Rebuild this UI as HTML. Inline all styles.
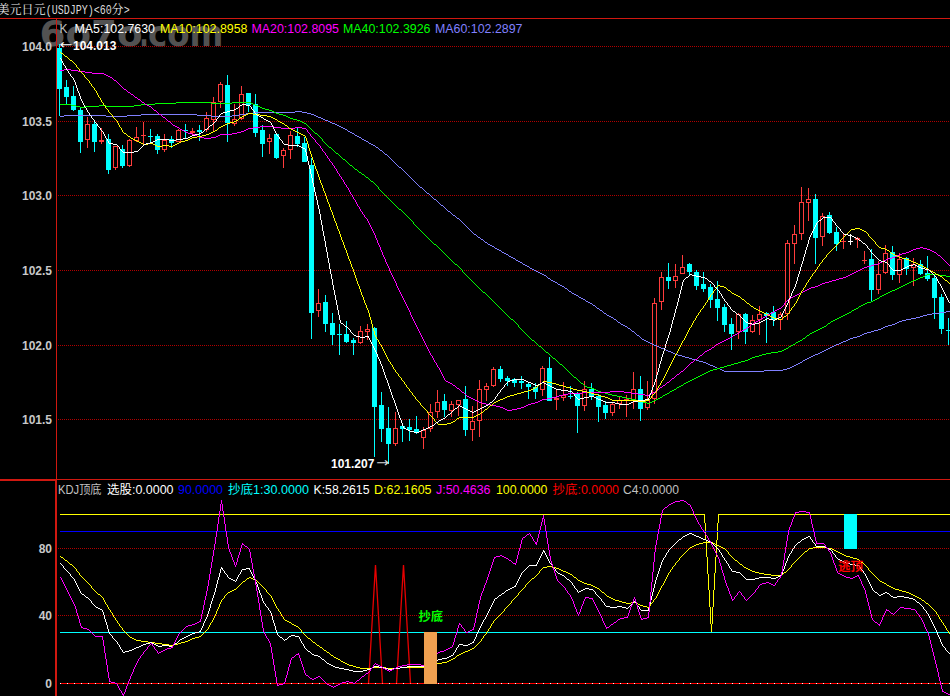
<!DOCTYPE html><html><head><meta charset="utf-8"><title>USDJPY</title><style>html,body{margin:0;padding:0;background:#000;overflow:hidden}svg{display:block}text{white-space:pre}</style></head><body>
<svg width="950" height="696" viewBox="0 0 950 696">
<rect width="950" height="696" fill="#000"/>
<text y="45.5" font-family="'DejaVu Sans',sans-serif" font-weight="bold" font-size="35" fill="#525252"><tspan x="39.6" textLength="103" lengthAdjust="spacingAndGlyphs">6o7o</tspan><tspan x="139.2" textLength="9.5" lengthAdjust="spacingAndGlyphs">.</tspan><tspan x="148" textLength="75.5" lengthAdjust="spacingAndGlyphs">com</tspan></text>
<g shape-rendering="crispEdges">
<rect x="0" y="18" width="950" height="1" fill="#d01810"/>
<rect x="0" y="479" width="950" height="1" fill="#d01810"/>
<rect x="0" y="480" width="57" height="1" fill="#d01810"/>
<rect x="56" y="18" width="1" height="678" fill="#d01810"/>
<rect x="55" y="480" width="1" height="216" fill="#d01810"/>
<line x1="58" y1="46.5" x2="950" y2="46.5" stroke="#b00000" stroke-width="1" stroke-dasharray="1 1"/>
<line x1="58" y1="121.5" x2="950" y2="121.5" stroke="#b00000" stroke-width="1" stroke-dasharray="1 1"/>
<line x1="58" y1="195.5" x2="950" y2="195.5" stroke="#b00000" stroke-width="1" stroke-dasharray="1 1"/>
<line x1="58" y1="270.5" x2="950" y2="270.5" stroke="#b00000" stroke-width="1" stroke-dasharray="1 1"/>
<line x1="58" y1="345.5" x2="950" y2="345.5" stroke="#b00000" stroke-width="1" stroke-dasharray="1 1"/>
<line x1="58" y1="419.5" x2="950" y2="419.5" stroke="#b00000" stroke-width="1" stroke-dasharray="1 1"/>
<line x1="58" y1="548.5" x2="950" y2="548.5" stroke="#b00000" stroke-width="1" stroke-dasharray="1 1"/>
<line x1="58" y1="615.5" x2="950" y2="615.5" stroke="#b00000" stroke-width="1" stroke-dasharray="1 1"/>
</g>
<g shape-rendering="crispEdges">
<rect x="59" y="44" width="1" height="72" fill="#00ffff"/>
<rect x="57" y="48" width="5" height="41" fill="#00ffff"/>
<rect x="66" y="80" width="1" height="25" fill="#00ffff"/>
<rect x="64" y="87" width="5" height="10" fill="#00ffff"/>
<rect x="73" y="86" width="1" height="25" fill="#00ffff"/>
<rect x="71" y="96" width="5" height="14" fill="#00ffff"/>
<rect x="80" y="108" width="1" height="45" fill="#00ffff"/>
<rect x="78" y="110" width="5" height="32" fill="#00ffff"/>
<rect x="87" y="117" width="1" height="7" fill="#ff3c3c"/>
<rect x="87" y="140" width="1" height="8" fill="#ff3c3c"/>
<rect x="85.5" y="124.5" width="4" height="15" fill="#000" stroke="#ff3c3c" stroke-width="1"/>
<rect x="94" y="122" width="1" height="30" fill="#00ffff"/>
<rect x="92" y="124" width="5" height="18" fill="#00ffff"/>
<rect x="101" y="128" width="1" height="12" fill="#ff3c3c"/>
<rect x="101" y="142" width="1" height="2" fill="#ff3c3c"/>
<rect x="99" y="140" width="5" height="2" fill="#ff3c3c"/>
<rect x="108" y="134" width="1" height="40" fill="#00ffff"/>
<rect x="106" y="139" width="5" height="31" fill="#00ffff"/>
<rect x="115" y="168" width="1" height="2" fill="#ff3c3c"/>
<rect x="113.5" y="146.5" width="4" height="21" fill="#000" stroke="#ff3c3c" stroke-width="1"/>
<rect x="122" y="145" width="1" height="23" fill="#00ffff"/>
<rect x="120" y="149" width="5" height="17" fill="#00ffff"/>
<rect x="129" y="139" width="1" height="1" fill="#ff3c3c"/>
<rect x="129" y="166" width="1" height="1" fill="#ff3c3c"/>
<rect x="127.5" y="140.5" width="4" height="25" fill="#000" stroke="#ff3c3c" stroke-width="1"/>
<rect x="136" y="127" width="1" height="10" fill="#ff3c3c"/>
<rect x="136" y="141" width="1" height="1" fill="#ff3c3c"/>
<rect x="134.5" y="137.5" width="4" height="3" fill="#000" stroke="#ff3c3c" stroke-width="1"/>
<rect x="143" y="122" width="1" height="13" fill="#ff3c3c"/>
<rect x="143" y="136" width="1" height="8" fill="#ff3c3c"/>
<rect x="141" y="135" width="5" height="1" fill="#ff3c3c"/>
<rect x="150" y="129" width="1" height="15" fill="#00ffff"/>
<rect x="148" y="136" width="5" height="1" fill="#00ffff"/>
<rect x="157" y="134" width="1" height="20" fill="#00ffff"/>
<rect x="155" y="136" width="5" height="14" fill="#00ffff"/>
<rect x="164" y="134" width="1" height="6" fill="#ff3c3c"/>
<rect x="164" y="150" width="1" height="2" fill="#ff3c3c"/>
<rect x="162.5" y="140.5" width="4" height="9" fill="#000" stroke="#ff3c3c" stroke-width="1"/>
<rect x="171" y="136" width="1" height="12" fill="#00ffff"/>
<rect x="169" y="139" width="5" height="4" fill="#00ffff"/>
<rect x="178" y="129" width="1" height="1" fill="#ff3c3c"/>
<rect x="176.5" y="130.5" width="4" height="11" fill="#000" stroke="#ff3c3c" stroke-width="1"/>
<rect x="185" y="124" width="1" height="14" fill="#00ffff"/>
<rect x="183" y="130" width="5" height="1" fill="#00ffff"/>
<rect x="192" y="128" width="1" height="3" fill="#ff3c3c"/>
<rect x="192" y="133" width="1" height="3" fill="#ff3c3c"/>
<rect x="190" y="131" width="5" height="2" fill="#ff3c3c"/>
<rect x="199" y="125" width="1" height="16" fill="#00ffff"/>
<rect x="197" y="130" width="5" height="2" fill="#00ffff"/>
<rect x="206" y="112" width="1" height="6" fill="#ff3c3c"/>
<rect x="206" y="130" width="1" height="2" fill="#ff3c3c"/>
<rect x="204.5" y="118.5" width="4" height="11" fill="#000" stroke="#ff3c3c" stroke-width="1"/>
<rect x="213" y="97" width="1" height="5" fill="#ff3c3c"/>
<rect x="213" y="120" width="1" height="12" fill="#ff3c3c"/>
<rect x="211.5" y="102.5" width="4" height="17" fill="#000" stroke="#ff3c3c" stroke-width="1"/>
<rect x="220" y="82" width="1" height="2" fill="#ff3c3c"/>
<rect x="220" y="102" width="1" height="6" fill="#ff3c3c"/>
<rect x="218.5" y="84.5" width="4" height="17" fill="#000" stroke="#ff3c3c" stroke-width="1"/>
<rect x="227" y="75" width="1" height="67" fill="#00ffff"/>
<rect x="225" y="85" width="5" height="38" fill="#00ffff"/>
<rect x="234" y="104" width="1" height="15" fill="#ff3c3c"/>
<rect x="234" y="124" width="1" height="2" fill="#ff3c3c"/>
<rect x="232.5" y="119.5" width="4" height="4" fill="#000" stroke="#ff3c3c" stroke-width="1"/>
<rect x="241" y="86" width="1" height="8" fill="#ff3c3c"/>
<rect x="241" y="119" width="1" height="1" fill="#ff3c3c"/>
<rect x="239.5" y="94.5" width="4" height="24" fill="#000" stroke="#ff3c3c" stroke-width="1"/>
<rect x="248" y="93" width="1" height="19" fill="#00ffff"/>
<rect x="246" y="93" width="5" height="12" fill="#00ffff"/>
<rect x="255" y="94" width="1" height="43" fill="#00ffff"/>
<rect x="253" y="104" width="5" height="29" fill="#00ffff"/>
<rect x="262" y="125" width="1" height="32" fill="#00ffff"/>
<rect x="260" y="130" width="5" height="14" fill="#00ffff"/>
<rect x="269" y="134" width="1" height="4" fill="#ff3c3c"/>
<rect x="269" y="142" width="1" height="12" fill="#ff3c3c"/>
<rect x="267.5" y="138.5" width="4" height="3" fill="#000" stroke="#ff3c3c" stroke-width="1"/>
<rect x="276" y="134" width="1" height="25" fill="#00ffff"/>
<rect x="274" y="134" width="5" height="24" fill="#00ffff"/>
<rect x="283" y="148" width="1" height="2" fill="#ff3c3c"/>
<rect x="283" y="156" width="1" height="12" fill="#ff3c3c"/>
<rect x="281.5" y="150.5" width="4" height="5" fill="#000" stroke="#ff3c3c" stroke-width="1"/>
<rect x="290" y="131" width="1" height="4" fill="#ff3c3c"/>
<rect x="290" y="150" width="1" height="9" fill="#ff3c3c"/>
<rect x="288.5" y="135.5" width="4" height="14" fill="#000" stroke="#ff3c3c" stroke-width="1"/>
<rect x="297" y="128" width="1" height="19" fill="#00ffff"/>
<rect x="295" y="136" width="5" height="8" fill="#00ffff"/>
<rect x="304" y="137" width="1" height="25" fill="#00ffff"/>
<rect x="302" y="143" width="5" height="19" fill="#00ffff"/>
<rect x="311" y="158" width="1" height="181" fill="#00ffff"/>
<rect x="309" y="165" width="5" height="148" fill="#00ffff"/>
<rect x="318" y="289" width="1" height="14" fill="#ff3c3c"/>
<rect x="318" y="311" width="1" height="6" fill="#ff3c3c"/>
<rect x="316.5" y="303.5" width="4" height="7" fill="#000" stroke="#ff3c3c" stroke-width="1"/>
<rect x="325" y="295" width="1" height="37" fill="#00ffff"/>
<rect x="323" y="302" width="5" height="22" fill="#00ffff"/>
<rect x="332" y="313" width="1" height="32" fill="#00ffff"/>
<rect x="330" y="323" width="5" height="12" fill="#00ffff"/>
<rect x="339" y="324" width="1" height="31" fill="#00ffff"/>
<rect x="337" y="334" width="5" height="1" fill="#00ffff"/>
<rect x="346" y="321" width="1" height="22" fill="#00ffff"/>
<rect x="344" y="334" width="5" height="8" fill="#00ffff"/>
<rect x="353" y="338" width="1" height="17" fill="#00ffff"/>
<rect x="351" y="340" width="5" height="3" fill="#00ffff"/>
<rect x="360" y="326" width="1" height="5" fill="#ff3c3c"/>
<rect x="360" y="343" width="1" height="1" fill="#ff3c3c"/>
<rect x="358.5" y="331.5" width="4" height="11" fill="#000" stroke="#ff3c3c" stroke-width="1"/>
<rect x="367" y="324" width="1" height="5" fill="#ff3c3c"/>
<rect x="367" y="332" width="1" height="8" fill="#ff3c3c"/>
<rect x="365.5" y="329.5" width="4" height="2" fill="#000" stroke="#ff3c3c" stroke-width="1"/>
<rect x="374" y="327" width="1" height="130" fill="#00ffff"/>
<rect x="372" y="328" width="5" height="79" fill="#00ffff"/>
<rect x="381" y="392" width="1" height="50" fill="#00ffff"/>
<rect x="379" y="405" width="5" height="24" fill="#00ffff"/>
<rect x="388" y="407" width="1" height="57" fill="#00ffff"/>
<rect x="386" y="428" width="5" height="16" fill="#00ffff"/>
<rect x="395" y="412" width="1" height="16" fill="#ff3c3c"/>
<rect x="395" y="444" width="1" height="2" fill="#ff3c3c"/>
<rect x="393.5" y="428.5" width="4" height="15" fill="#000" stroke="#ff3c3c" stroke-width="1"/>
<rect x="402" y="424" width="1" height="18" fill="#00ffff"/>
<rect x="400" y="426" width="5" height="3" fill="#00ffff"/>
<rect x="409" y="419" width="1" height="22" fill="#00ffff"/>
<rect x="407" y="427" width="5" height="3" fill="#00ffff"/>
<rect x="416" y="416" width="1" height="18" fill="#00ffff"/>
<rect x="414" y="429" width="5" height="3" fill="#00ffff"/>
<rect x="423" y="427" width="1" height="3" fill="#ff3c3c"/>
<rect x="423" y="438" width="1" height="11" fill="#ff3c3c"/>
<rect x="421.5" y="430.5" width="4" height="7" fill="#000" stroke="#ff3c3c" stroke-width="1"/>
<rect x="430" y="404" width="1" height="8" fill="#ff3c3c"/>
<rect x="430" y="429" width="1" height="3" fill="#ff3c3c"/>
<rect x="428.5" y="412.5" width="4" height="16" fill="#000" stroke="#ff3c3c" stroke-width="1"/>
<rect x="437" y="390" width="1" height="12" fill="#ff3c3c"/>
<rect x="437" y="412" width="1" height="6" fill="#ff3c3c"/>
<rect x="435.5" y="402.5" width="4" height="9" fill="#000" stroke="#ff3c3c" stroke-width="1"/>
<rect x="444" y="394" width="1" height="23" fill="#00ffff"/>
<rect x="442" y="401" width="5" height="9" fill="#00ffff"/>
<rect x="451" y="401" width="1" height="3" fill="#ff3c3c"/>
<rect x="451" y="411" width="1" height="6" fill="#ff3c3c"/>
<rect x="449.5" y="404.5" width="4" height="6" fill="#000" stroke="#ff3c3c" stroke-width="1"/>
<rect x="458" y="405" width="1" height="11" fill="#ff3c3c"/>
<rect x="456.5" y="400.5" width="4" height="4" fill="#000" stroke="#ff3c3c" stroke-width="1"/>
<rect x="465" y="386" width="1" height="50" fill="#00ffff"/>
<rect x="463" y="399" width="5" height="31" fill="#00ffff"/>
<rect x="472" y="406" width="1" height="15" fill="#ff3c3c"/>
<rect x="472" y="430" width="1" height="11" fill="#ff3c3c"/>
<rect x="470.5" y="421.5" width="4" height="8" fill="#000" stroke="#ff3c3c" stroke-width="1"/>
<rect x="479" y="380" width="1" height="9" fill="#ff3c3c"/>
<rect x="479" y="421" width="1" height="16" fill="#ff3c3c"/>
<rect x="477.5" y="389.5" width="4" height="31" fill="#000" stroke="#ff3c3c" stroke-width="1"/>
<rect x="486" y="383" width="1" height="3" fill="#ff3c3c"/>
<rect x="486" y="390" width="1" height="11" fill="#ff3c3c"/>
<rect x="484.5" y="386.5" width="4" height="3" fill="#000" stroke="#ff3c3c" stroke-width="1"/>
<rect x="493" y="367" width="1" height="2" fill="#ff3c3c"/>
<rect x="493" y="386" width="1" height="1" fill="#ff3c3c"/>
<rect x="491.5" y="369.5" width="4" height="16" fill="#000" stroke="#ff3c3c" stroke-width="1"/>
<rect x="500" y="366" width="1" height="16" fill="#00ffff"/>
<rect x="498" y="369" width="5" height="10" fill="#00ffff"/>
<rect x="507" y="376" width="1" height="10" fill="#00ffff"/>
<rect x="505" y="378" width="5" height="3" fill="#00ffff"/>
<rect x="514" y="378" width="1" height="9" fill="#00ffff"/>
<rect x="512" y="379" width="5" height="4" fill="#00ffff"/>
<rect x="521" y="376" width="1" height="13" fill="#00ffff"/>
<rect x="519" y="381" width="5" height="2" fill="#00ffff"/>
<rect x="528" y="382" width="1" height="17" fill="#00ffff"/>
<rect x="526" y="384" width="5" height="3" fill="#00ffff"/>
<rect x="535" y="383" width="1" height="16" fill="#00ffff"/>
<rect x="533" y="387" width="5" height="5" fill="#00ffff"/>
<rect x="542" y="366" width="1" height="2" fill="#ff3c3c"/>
<rect x="542" y="390" width="1" height="6" fill="#ff3c3c"/>
<rect x="540.5" y="368.5" width="4" height="21" fill="#000" stroke="#ff3c3c" stroke-width="1"/>
<rect x="549" y="357" width="1" height="44" fill="#00ffff"/>
<rect x="547" y="368" width="5" height="33" fill="#00ffff"/>
<rect x="556" y="389" width="1" height="9" fill="#ff3c3c"/>
<rect x="556" y="400" width="1" height="10" fill="#ff3c3c"/>
<rect x="554" y="398" width="5" height="2" fill="#ff3c3c"/>
<rect x="563" y="382" width="1" height="13" fill="#ff3c3c"/>
<rect x="563" y="398" width="1" height="3" fill="#ff3c3c"/>
<rect x="561.5" y="395.5" width="4" height="2" fill="#000" stroke="#ff3c3c" stroke-width="1"/>
<rect x="570" y="386" width="1" height="13" fill="#00ffff"/>
<rect x="568" y="396" width="5" height="1" fill="#00ffff"/>
<rect x="577" y="392" width="1" height="41" fill="#00ffff"/>
<rect x="575" y="394" width="5" height="12" fill="#00ffff"/>
<rect x="584" y="381" width="1" height="8" fill="#ff3c3c"/>
<rect x="584" y="406" width="1" height="5" fill="#ff3c3c"/>
<rect x="582.5" y="389.5" width="4" height="16" fill="#000" stroke="#ff3c3c" stroke-width="1"/>
<rect x="591" y="383" width="1" height="17" fill="#00ffff"/>
<rect x="589" y="389" width="5" height="7" fill="#00ffff"/>
<rect x="598" y="394" width="1" height="28" fill="#00ffff"/>
<rect x="596" y="396" width="5" height="11" fill="#00ffff"/>
<rect x="605" y="401" width="1" height="18" fill="#00ffff"/>
<rect x="603" y="405" width="5" height="8" fill="#00ffff"/>
<rect x="612" y="403" width="1" height="1" fill="#ff3c3c"/>
<rect x="612" y="413" width="1" height="3" fill="#ff3c3c"/>
<rect x="610.5" y="404.5" width="4" height="8" fill="#000" stroke="#ff3c3c" stroke-width="1"/>
<rect x="619" y="396" width="1" height="4" fill="#ff3c3c"/>
<rect x="619" y="404" width="1" height="5" fill="#ff3c3c"/>
<rect x="617.5" y="400.5" width="4" height="3" fill="#000" stroke="#ff3c3c" stroke-width="1"/>
<rect x="626" y="395" width="1" height="4" fill="#ff3c3c"/>
<rect x="626" y="400" width="1" height="17" fill="#ff3c3c"/>
<rect x="624" y="399" width="5" height="1" fill="#ff3c3c"/>
<rect x="633" y="372" width="1" height="17" fill="#ff3c3c"/>
<rect x="633" y="400" width="1" height="9" fill="#ff3c3c"/>
<rect x="631.5" y="389.5" width="4" height="10" fill="#000" stroke="#ff3c3c" stroke-width="1"/>
<rect x="640" y="376" width="1" height="45" fill="#00ffff"/>
<rect x="638" y="389" width="5" height="20" fill="#00ffff"/>
<rect x="647" y="381" width="1" height="18" fill="#ff3c3c"/>
<rect x="647" y="408" width="1" height="2" fill="#ff3c3c"/>
<rect x="645.5" y="399.5" width="4" height="8" fill="#000" stroke="#ff3c3c" stroke-width="1"/>
<rect x="654" y="298" width="1" height="5" fill="#ff3c3c"/>
<rect x="654" y="399" width="1" height="5" fill="#ff3c3c"/>
<rect x="652.5" y="303.5" width="4" height="95" fill="#000" stroke="#ff3c3c" stroke-width="1"/>
<rect x="661" y="272" width="1" height="5" fill="#ff3c3c"/>
<rect x="661" y="302" width="1" height="8" fill="#ff3c3c"/>
<rect x="659.5" y="277.5" width="4" height="24" fill="#000" stroke="#ff3c3c" stroke-width="1"/>
<rect x="668" y="263" width="1" height="26" fill="#00ffff"/>
<rect x="666" y="277" width="5" height="4" fill="#00ffff"/>
<rect x="675" y="264" width="1" height="12" fill="#ff3c3c"/>
<rect x="675" y="281" width="1" height="7" fill="#ff3c3c"/>
<rect x="673.5" y="276.5" width="4" height="4" fill="#000" stroke="#ff3c3c" stroke-width="1"/>
<rect x="682" y="255" width="1" height="12" fill="#ff3c3c"/>
<rect x="680.5" y="267.5" width="4" height="6" fill="#000" stroke="#ff3c3c" stroke-width="1"/>
<rect x="689" y="263" width="1" height="13" fill="#00ffff"/>
<rect x="687" y="264" width="5" height="8" fill="#00ffff"/>
<rect x="696" y="270" width="1" height="20" fill="#00ffff"/>
<rect x="694" y="272" width="5" height="14" fill="#00ffff"/>
<rect x="703" y="272" width="1" height="20" fill="#00ffff"/>
<rect x="701" y="284" width="5" height="5" fill="#00ffff"/>
<rect x="710" y="284" width="1" height="24" fill="#00ffff"/>
<rect x="708" y="287" width="5" height="13" fill="#00ffff"/>
<rect x="717" y="281" width="1" height="40" fill="#00ffff"/>
<rect x="715" y="299" width="5" height="9" fill="#00ffff"/>
<rect x="724" y="304" width="1" height="28" fill="#00ffff"/>
<rect x="722" y="307" width="5" height="18" fill="#00ffff"/>
<rect x="731" y="318" width="1" height="32" fill="#00ffff"/>
<rect x="729" y="324" width="5" height="10" fill="#00ffff"/>
<rect x="738" y="313" width="1" height="1" fill="#ff3c3c"/>
<rect x="738" y="332" width="1" height="7" fill="#ff3c3c"/>
<rect x="736.5" y="314.5" width="4" height="17" fill="#000" stroke="#ff3c3c" stroke-width="1"/>
<rect x="745" y="313" width="1" height="31" fill="#00ffff"/>
<rect x="743" y="314" width="5" height="18" fill="#00ffff"/>
<rect x="752" y="315" width="1" height="5" fill="#ff3c3c"/>
<rect x="752" y="332" width="1" height="1" fill="#ff3c3c"/>
<rect x="750.5" y="320.5" width="4" height="11" fill="#000" stroke="#ff3c3c" stroke-width="1"/>
<rect x="759" y="306" width="1" height="8" fill="#ff3c3c"/>
<rect x="759" y="320" width="1" height="15" fill="#ff3c3c"/>
<rect x="757.5" y="314.5" width="4" height="5" fill="#000" stroke="#ff3c3c" stroke-width="1"/>
<rect x="766" y="312" width="1" height="31" fill="#00ffff"/>
<rect x="764" y="313" width="5" height="3" fill="#00ffff"/>
<rect x="773" y="306" width="1" height="20" fill="#00ffff"/>
<rect x="771" y="312" width="5" height="8" fill="#00ffff"/>
<rect x="780" y="312" width="1" height="2" fill="#ff3c3c"/>
<rect x="780" y="320" width="1" height="10" fill="#ff3c3c"/>
<rect x="778.5" y="314.5" width="4" height="5" fill="#000" stroke="#ff3c3c" stroke-width="1"/>
<rect x="787" y="240" width="1" height="3" fill="#ff3c3c"/>
<rect x="787" y="314" width="1" height="6" fill="#ff3c3c"/>
<rect x="785.5" y="243.5" width="4" height="70" fill="#000" stroke="#ff3c3c" stroke-width="1"/>
<rect x="794" y="225" width="1" height="9" fill="#ff3c3c"/>
<rect x="794" y="244" width="1" height="20" fill="#ff3c3c"/>
<rect x="792.5" y="234.5" width="4" height="9" fill="#000" stroke="#ff3c3c" stroke-width="1"/>
<rect x="801" y="187" width="1" height="15" fill="#ff3c3c"/>
<rect x="801" y="234" width="1" height="6" fill="#ff3c3c"/>
<rect x="799.5" y="202.5" width="4" height="31" fill="#000" stroke="#ff3c3c" stroke-width="1"/>
<rect x="808" y="188" width="1" height="11" fill="#ff3c3c"/>
<rect x="808" y="203" width="1" height="18" fill="#ff3c3c"/>
<rect x="806.5" y="199.5" width="4" height="3" fill="#000" stroke="#ff3c3c" stroke-width="1"/>
<rect x="815" y="194" width="1" height="70" fill="#00ffff"/>
<rect x="813" y="199" width="5" height="39" fill="#00ffff"/>
<rect x="822" y="213" width="1" height="3" fill="#ff3c3c"/>
<rect x="822" y="237" width="1" height="9" fill="#ff3c3c"/>
<rect x="820.5" y="216.5" width="4" height="20" fill="#000" stroke="#ff3c3c" stroke-width="1"/>
<rect x="829" y="212" width="1" height="22" fill="#00ffff"/>
<rect x="827" y="215" width="5" height="18" fill="#00ffff"/>
<rect x="836" y="227" width="1" height="24" fill="#00ffff"/>
<rect x="834" y="232" width="5" height="12" fill="#00ffff"/>
<rect x="843" y="234" width="1" height="7" fill="#ff3c3c"/>
<rect x="843" y="242" width="1" height="7" fill="#ff3c3c"/>
<rect x="841" y="241" width="5" height="1" fill="#ff3c3c"/>
<rect x="850" y="234" width="1" height="11" fill="#ffffff"/>
<rect x="848" y="241" width="5" height="1" fill="#ffffff"/>
<rect x="857" y="237" width="1" height="1" fill="#ff3c3c"/>
<rect x="857" y="240" width="1" height="8" fill="#ff3c3c"/>
<rect x="855" y="238" width="5" height="2" fill="#ff3c3c"/>
<rect x="864" y="251" width="1" height="9" fill="#ff3c3c"/>
<rect x="864" y="261" width="1" height="3" fill="#ff3c3c"/>
<rect x="862" y="260" width="5" height="1" fill="#ff3c3c"/>
<rect x="871" y="249" width="1" height="52" fill="#00ffff"/>
<rect x="869" y="259" width="5" height="31" fill="#00ffff"/>
<rect x="878" y="261" width="1" height="13" fill="#ff3c3c"/>
<rect x="878" y="290" width="1" height="4" fill="#ff3c3c"/>
<rect x="876.5" y="274.5" width="4" height="15" fill="#000" stroke="#ff3c3c" stroke-width="1"/>
<rect x="885" y="245" width="1" height="8" fill="#ff3c3c"/>
<rect x="885" y="273" width="1" height="1" fill="#ff3c3c"/>
<rect x="883.5" y="253.5" width="4" height="19" fill="#000" stroke="#ff3c3c" stroke-width="1"/>
<rect x="892" y="246" width="1" height="34" fill="#00ffff"/>
<rect x="890" y="252" width="5" height="23" fill="#00ffff"/>
<rect x="899" y="253" width="1" height="6" fill="#ff3c3c"/>
<rect x="899" y="275" width="1" height="8" fill="#ff3c3c"/>
<rect x="897.5" y="259.5" width="4" height="15" fill="#000" stroke="#ff3c3c" stroke-width="1"/>
<rect x="906" y="257" width="1" height="18" fill="#00ffff"/>
<rect x="904" y="258" width="5" height="11" fill="#00ffff"/>
<rect x="913" y="258" width="1" height="6" fill="#ff3c3c"/>
<rect x="913" y="268" width="1" height="18" fill="#ff3c3c"/>
<rect x="911.5" y="264.5" width="4" height="3" fill="#000" stroke="#ff3c3c" stroke-width="1"/>
<rect x="920" y="260" width="1" height="15" fill="#00ffff"/>
<rect x="918" y="264" width="5" height="10" fill="#00ffff"/>
<rect x="927" y="256" width="1" height="25" fill="#00ffff"/>
<rect x="925" y="273" width="5" height="6" fill="#00ffff"/>
<rect x="934" y="274" width="1" height="45" fill="#00ffff"/>
<rect x="932" y="278" width="5" height="20" fill="#00ffff"/>
<rect x="941" y="294" width="1" height="40" fill="#00ffff"/>
<rect x="939" y="297" width="5" height="32" fill="#00ffff"/>
<rect x="948" y="318" width="1" height="27" fill="#00ffff"/>
<rect x="946" y="330" width="5" height="1" fill="#00ffff"/>
</g>
<g shape-rendering="crispEdges">
<path d="M295,111.5h7M253,112.5h42M302,112.5h5M246,113.5h7M307,113.5h4M141,114.5h56M239,114.5h7M311,114.5h3M64,115.5h42M127,115.5h14M197,115.5h14M232,115.5h7M314,115.5h2M60,116.5h4M106,116.5h21M211,116.5h21M316,116.5h2M318,117.5h3M321,118.5h2M323,119.5h2M325,120.5h3M328,121.5h2M330,122.5h2M332,123.5h3M335,124.5h2M337,125.5h2M339,126.5h2M341,127.5h2M343,128.5h2M345,129.5h2M347,130.5h1M348,131.5h2M350,132.5h2M352,133.5h2M354,134.5h1M355,135.5h2M357,136.5h2M359,137.5h2M361,138.5h1M362,139.5h2M364,140.5h2M366,141.5h2M368,142.5h1M369,143.5h2M371,144.5h2M373,145.5h2M375,146.5h1M376,147.5h2M378,148.5h1M379,149.5h1M380,150.5h2M382,151.5h1M383,152.5h1M384,153.5h1M385,154.5h2M387,155.5h1M388,156.5h1M389,157.5h1M390,158.5h1M391,159.5h1M392,160.5h1M393,161.5h1M394,162.5h1M395,163.5h1M396,164.5h1M397,165.5h1M398,166.5h1M399,167.5h2M401,168.5h1M402,169.5h1M403,170.5h1M404,171.5h1M405,172.5h1M406,173.5h1M407,174.5h1M408,175.5h1M409,176.5h1M410,177.5h1M411,178.5h1M412,179.5h1M413,180.5h1M414,181.5h1M415,182.5h1M416,183.5h1M417,184.5h1M418,185.5h1M419,186.5h1M420,187.5h2M422,188.5h1M423,189.5h1M424,190.5h1M425,191.5h1M426,192.5h1M427,193.5h2M429,194.5h1M430,195.5h1M431,196.5h1M432,197.5h1M433,198.5h1M434,199.5h2M436,200.5h1M437,201.5h1M438,202.5h1M439,203.5h1M440,204.5h1M441,205.5h2M443,206.5h1M444,207.5h1M445,208.5h1M446,209.5h1M447,210.5h1M448,211.5h2M450,212.5h1M451,213.5h1M452,214.5h1M453,215.5h2M455,216.5h1M456,217.5h1M457,218.5h2M459,219.5h1M460,220.5h1M461,221.5h1M462,222.5h1M463,223.5h1M464,224.5h1M465,225.5h1M466,226.5h1M467,227.5h1M468,228.5h1M469,229.5h1M470,230.5h1M471,231.5h1M472,232.5h1M473,233.5h1M474,234.5h2M476,235.5h1M477,236.5h1M478,237.5h2M480,238.5h1M481,239.5h2M483,240.5h1M484,241.5h1M485,242.5h2M487,243.5h1M488,244.5h2M490,245.5h2M492,246.5h2M494,247.5h1M495,248.5h2M497,249.5h2M499,250.5h2M501,251.5h1M502,252.5h2M504,253.5h2M506,254.5h2M508,255.5h1M509,256.5h2M511,257.5h2M513,258.5h2M515,259.5h1M516,260.5h2M518,261.5h2M520,262.5h2M522,263.5h1M523,264.5h2M525,265.5h2M527,266.5h2M529,267.5h1M530,268.5h2M532,269.5h2M534,270.5h2M536,271.5h2M538,272.5h2M540,273.5h2M542,274.5h2M544,275.5h2M546,276.5h1M547,277.5h1M548,278.5h2M550,279.5h1M551,280.5h2M553,281.5h2M555,282.5h2M557,283.5h1M558,284.5h2M560,285.5h2M562,286.5h2M564,287.5h1M565,288.5h2M567,289.5h1M568,290.5h1M569,291.5h2M571,292.5h1M572,293.5h2M574,294.5h2M576,295.5h2M578,296.5h1M579,297.5h2M581,298.5h2M583,299.5h2M585,300.5h1M586,301.5h2M588,302.5h2M590,303.5h2M592,304.5h1M593,305.5h2M595,306.5h1M596,307.5h1M597,308.5h2M599,309.5h1M600,310.5h2M602,311.5h1M946,311.5h4M603,312.5h1M939,312.5h7M604,313.5h2M932,313.5h7M606,314.5h1M927,314.5h5M607,315.5h2M923,315.5h4M609,316.5h2M920,316.5h3M611,317.5h2M916,317.5h4M613,318.5h1M911,318.5h5M614,319.5h2M906,319.5h5M616,320.5h1M902,320.5h4M617,321.5h1M899,321.5h3M618,322.5h2M897,322.5h2M620,323.5h1M895,323.5h2M621,324.5h2M892,324.5h3M623,325.5h2M888,325.5h4M625,326.5h2M885,326.5h3M627,327.5h1M883,327.5h2M628,328.5h2M881,328.5h2M630,329.5h1M878,329.5h3M631,330.5h1M874,330.5h4M632,331.5h2M871,331.5h3M634,332.5h1M867,332.5h4M635,333.5h1M864,333.5h3M636,334.5h1M862,334.5h2M637,335.5h2M860,335.5h2M639,336.5h1M857,336.5h3M640,337.5h1M853,337.5h4M641,338.5h1M850,338.5h3M642,339.5h2M848,339.5h2M644,340.5h2M846,340.5h2M646,341.5h2M843,341.5h3M648,342.5h2M841,342.5h2M650,343.5h2M839,343.5h2M652,344.5h2M836,344.5h3M654,345.5h3M834,345.5h2M657,346.5h2M832,346.5h2M659,347.5h2M830,347.5h2M661,348.5h3M828,348.5h2M664,349.5h2M826,349.5h2M666,350.5h2M824,350.5h2M668,351.5h3M822,351.5h2M671,352.5h2M820,352.5h2M673,353.5h2M818,353.5h2M675,354.5h3M815,354.5h3M678,355.5h4M813,355.5h2M682,356.5h3M811,356.5h2M685,357.5h4M809,357.5h2M689,358.5h3M807,358.5h2M692,359.5h4M805,359.5h2M696,360.5h3M803,360.5h2M699,361.5h4M802,361.5h1M703,362.5h3M800,362.5h2M706,363.5h2M798,363.5h2M708,364.5h2M796,364.5h2M710,365.5h3M794,365.5h2M713,366.5h2M792,366.5h2M715,367.5h2M790,367.5h2M717,368.5h3M787,368.5h3M720,369.5h2M783,369.5h4M722,370.5h2M764,370.5h19M724,371.5h40" fill="none" stroke="#8080ff" stroke-width="1"/>
<path d="M322.5,139v2M378.5,187v2M413.5,222v2M462.5,270v2M518.5,325v2M176,102.5h35M232,102.5h19M155,103.5h21M211,103.5h21M251,103.5h2M60,104.5h11M141,104.5h14M253,104.5h2M71,105.5h5M99,105.5h7M134,105.5h7M255,105.5h3M76,106.5h4M85,106.5h14M106,106.5h28M258,106.5h2M80,107.5h5M260,107.5h2M262,108.5h3M265,109.5h4M269,110.5h3M272,111.5h2M274,112.5h2M276,113.5h3M279,114.5h4M283,115.5h3M286,116.5h2M288,117.5h2M290,118.5h3M293,119.5h4M297,120.5h3M300,121.5h2M302,122.5h2M304,123.5h2M306,124.5h1M307,125.5h1M308,126.5h1M309,127.5h1M310,128.5h1M311,129.5h1M312,130.5h1M313,131.5h1M314,132.5h1M315,133.5h2M317,134.5h1M318,135.5h1M319,136.5h1M320,137.5h1M321,138.5h1M323,141.5h1M324,142.5h1M325,143.5h1M326,144.5h1M327,145.5h1M328,146.5h1M329,147.5h2M331,148.5h1M332,149.5h1M333,150.5h1M334,151.5h1M335,152.5h1M336,153.5h2M338,154.5h1M339,155.5h1M340,156.5h1M341,157.5h1M342,158.5h1M343,159.5h2M345,160.5h1M346,161.5h1M347,162.5h1M348,163.5h1M349,164.5h1M350,165.5h2M352,166.5h1M353,167.5h1M354,168.5h1M355,169.5h2M357,170.5h1M358,171.5h1M359,172.5h2M361,173.5h1M362,174.5h2M364,175.5h1M365,176.5h1M366,177.5h2M368,178.5h1M369,179.5h1M370,180.5h1M371,181.5h2M373,182.5h1M374,183.5h1M375,184.5h1M376,185.5h1M377,186.5h1M379,189.5h1M380,190.5h1M381,191.5h1M382,192.5h1M383,193.5h1M384,194.5h1M385,195.5h1M386,196.5h1M387,197.5h1M388,198.5h1M389,199.5h1M390,200.5h1M391,201.5h1M392,202.5h1M393,203.5h1M394,204.5h1M395,205.5h1M396,206.5h1M397,207.5h1M398,208.5h1M399,209.5h2M401,210.5h1M402,211.5h1M403,212.5h1M404,213.5h1M405,214.5h1M406,215.5h1M407,216.5h1M408,217.5h1M409,218.5h1M410,219.5h1M411,220.5h1M412,221.5h1M414,224.5h1M415,225.5h1M416,226.5h1M417,227.5h1M418,228.5h1M419,229.5h1M420,230.5h1M421,231.5h1M422,232.5h1M423,233.5h1M424,234.5h1M425,235.5h1M426,236.5h1M427,237.5h1M428,238.5h1M429,239.5h1M430,240.5h1M431,241.5h1M432,242.5h1M433,243.5h1M434,244.5h2M436,245.5h1M437,246.5h1M438,247.5h1M439,248.5h1M440,249.5h1M441,250.5h1M442,251.5h1M443,252.5h1M444,253.5h1M445,254.5h1M446,255.5h1M447,256.5h1M448,257.5h1M449,258.5h1M450,259.5h1M451,260.5h1M452,261.5h1M453,262.5h1M454,263.5h1M455,264.5h2M457,265.5h1M458,266.5h1M459,267.5h1M460,268.5h1M461,269.5h1M463,272.5h1M464,273.5h1M465,274.5h1M927,274.5h12M466,275.5h1M925,275.5h2M939,275.5h7M467,276.5h1M923,276.5h2M946,276.5h4M468,277.5h1M920,277.5h3M469,278.5h1M918,278.5h2M470,279.5h1M916,279.5h2M471,280.5h1M913,280.5h3M472,281.5h1M911,281.5h2M473,282.5h1M909,282.5h2M474,283.5h1M907,283.5h2M475,284.5h1M905,284.5h2M476,285.5h1M903,285.5h2M477,286.5h1M901,286.5h2M478,287.5h1M899,287.5h2M479,288.5h1M897,288.5h2M480,289.5h1M895,289.5h2M481,290.5h1M892,290.5h3M482,291.5h1M890,291.5h2M483,292.5h2M888,292.5h2M485,293.5h1M886,293.5h2M486,294.5h1M884,294.5h2M487,295.5h1M882,295.5h2M488,296.5h1M880,296.5h2M489,297.5h1M879,297.5h1M490,298.5h1M877,298.5h2M491,299.5h1M875,299.5h2M492,300.5h1M873,300.5h2M493,301.5h1M871,301.5h2M494,302.5h1M867,302.5h4M495,303.5h1M865,303.5h2M496,304.5h1M863,304.5h2M497,305.5h1M861,305.5h2M498,306.5h1M859,306.5h2M499,307.5h1M858,307.5h1M500,308.5h1M856,308.5h2M501,309.5h1M854,309.5h2M502,310.5h1M852,310.5h2M503,311.5h1M851,311.5h1M504,312.5h1M849,312.5h2M505,313.5h1M847,313.5h2M506,314.5h1M845,314.5h2M507,315.5h1M843,315.5h2M508,316.5h1M841,316.5h2M509,317.5h1M839,317.5h2M510,318.5h1M837,318.5h2M511,319.5h2M835,319.5h2M513,320.5h1M833,320.5h2M514,321.5h1M831,321.5h2M515,322.5h1M830,322.5h1M516,323.5h1M828,323.5h2M517,324.5h1M827,324.5h1M826,325.5h1M824,326.5h2M519,327.5h1M822,327.5h2M520,328.5h1M820,328.5h2M521,329.5h1M818,329.5h2M522,330.5h1M816,330.5h2M523,331.5h1M814,331.5h2M524,332.5h1M812,332.5h2M525,333.5h1M810,333.5h2M526,334.5h1M809,334.5h1M527,335.5h1M807,335.5h2M528,336.5h1M806,336.5h1M529,337.5h1M805,337.5h1M530,338.5h1M803,338.5h2M531,339.5h1M802,339.5h1M532,340.5h2M800,340.5h2M534,341.5h1M798,341.5h2M535,342.5h1M796,342.5h2M536,343.5h1M795,343.5h1M537,344.5h1M793,344.5h2M538,345.5h1M791,345.5h2M539,346.5h2M789,346.5h2M541,347.5h1M788,347.5h1M542,348.5h1M786,348.5h2M543,349.5h1M784,349.5h2M544,350.5h1M782,350.5h2M545,351.5h1M778,351.5h4M546,352.5h2M771,352.5h7M548,353.5h1M766,353.5h5M549,354.5h1M762,354.5h4M550,355.5h1M759,355.5h3M551,356.5h1M755,356.5h4M552,357.5h1M752,357.5h3M553,358.5h2M750,358.5h2M555,359.5h1M748,359.5h2M556,360.5h1M745,360.5h3M557,361.5h1M741,361.5h4M558,362.5h1M738,362.5h3M559,363.5h1M734,363.5h4M560,364.5h2M731,364.5h3M562,365.5h1M727,365.5h4M563,366.5h1M724,366.5h3M564,367.5h1M720,367.5h4M565,368.5h1M717,368.5h3M566,369.5h1M713,369.5h4M567,370.5h1M710,370.5h3M568,371.5h1M708,371.5h2M569,372.5h1M706,372.5h2M570,373.5h1M704,373.5h2M571,374.5h1M702,374.5h2M572,375.5h1M700,375.5h2M573,376.5h1M698,376.5h2M574,377.5h2M696,377.5h2M576,378.5h1M694,378.5h2M577,379.5h1M692,379.5h2M578,380.5h1M690,380.5h2M579,381.5h1M688,381.5h2M580,382.5h1M686,382.5h2M581,383.5h2M684,383.5h2M583,384.5h1M683,384.5h1M584,385.5h1M681,385.5h2M585,386.5h2M679,386.5h2M587,387.5h4M677,387.5h2M591,388.5h3M676,388.5h1M594,389.5h2M674,389.5h2M596,390.5h2M672,390.5h2M598,391.5h3M670,391.5h2M601,392.5h4M669,392.5h1M605,393.5h3M667,393.5h2M608,394.5h4M665,394.5h2M612,395.5h5M663,395.5h2M617,396.5h5M662,396.5h1M622,397.5h4M660,397.5h2M626,398.5h5M658,398.5h2M631,399.5h5M656,399.5h2M636,400.5h4M654,400.5h2M640,401.5h3M652,401.5h2M643,402.5h4M650,402.5h2M647,403.5h3" fill="none" stroke="#00ff00" stroke-width="1"/>
<path d="M307.5,130v2M310.5,134v2M315.5,140v2M320.5,146v2M322.5,149v2M325.5,153v2M327.5,156v2M329.5,159v2M332.5,163v2M334.5,166v2M336.5,169v2M337.5,171v2M339.5,174v2M341.5,177v2M343.5,180v2M344.5,182v2M346.5,185v2M348.5,188v2M349.5,190v2M350.5,192v2M352.5,195v2M353.5,197v2M355.5,200v2M356.5,202v2M357.5,204v2M359.5,207v2M360.5,209v2M362.5,212v2M364.5,215v2M367.5,219v2M368.5,221v2M369.5,223v2M370.5,225v2M371.5,227v2M372.5,229v2M373.5,231v2M374.5,233v2M375.5,235v3M376.5,238v2M377.5,240v3M378.5,243v2M379.5,245v2M380.5,247v3M381.5,250v2M382.5,252v3M383.5,255v2M384.5,257v2M385.5,259v3M386.5,262v2M387.5,264v2M388.5,266v2M389.5,268v3M390.5,271v2M391.5,273v2M392.5,275v2M393.5,277v2M394.5,279v2M395.5,281v2M396.5,283v3M397.5,286v2M398.5,288v2M399.5,290v2M400.5,292v2M401.5,294v2M402.5,296v2M403.5,298v2M404.5,300v2M405.5,302v2M406.5,304v2M407.5,306v2M408.5,308v2M409.5,310v2M410.5,312v3M411.5,315v2M412.5,317v2M413.5,319v2M414.5,321v2M415.5,323v2M416.5,325v2M417.5,327v2M418.5,329v2M419.5,331v2M420.5,333v2M421.5,335v2M422.5,337v2M423.5,339v2M424.5,341v2M425.5,343v2M426.5,345v2M427.5,347v2M428.5,349v2M429.5,351v2M430.5,353v2M432.5,356v2M433.5,358v2M434.5,360v2M436.5,363v2M437.5,365v2M439.5,368v2M440.5,370v2M441.5,372v2M442.5,374v2M443.5,376v2M444.5,378v2M784.5,303v2M64,69.5h7M60,70.5h4M71,70.5h7M78,71.5h7M85,72.5h7M92,73.5h12M104,74.5h2M106,75.5h2M108,76.5h2M110,77.5h2M112,78.5h1M113,79.5h1M114,80.5h2M116,81.5h1M117,82.5h1M118,83.5h1M119,84.5h1M120,85.5h1M121,86.5h1M122,87.5h1M123,88.5h1M124,89.5h2M126,90.5h1M127,91.5h1M128,92.5h2M130,93.5h1M131,94.5h2M133,95.5h1M134,96.5h1M135,97.5h2M137,98.5h1M138,99.5h2M140,100.5h1M141,101.5h1M142,102.5h2M144,103.5h1M145,104.5h2M147,105.5h2M149,106.5h2M151,107.5h1M152,108.5h1M153,109.5h1M154,110.5h2M156,111.5h1M157,112.5h1M158,113.5h1M159,114.5h2M161,115.5h1M162,116.5h1M163,117.5h2M165,118.5h1M166,119.5h1M167,120.5h1M168,121.5h2M170,122.5h1M171,123.5h1M172,124.5h1M173,125.5h2M175,126.5h2M260,126.5h14M177,127.5h2M253,127.5h7M274,127.5h7M295,127.5h7M179,128.5h1M248,128.5h5M281,128.5h14M302,128.5h4M180,129.5h2M246,129.5h2M306,129.5h1M182,130.5h2M244,130.5h2M184,131.5h2M241,131.5h3M186,132.5h2M237,132.5h4M308,132.5h1M188,133.5h4M232,133.5h5M309,133.5h1M192,134.5h3M220,134.5h12M195,135.5h2M218,135.5h2M197,136.5h2M216,136.5h2M311,136.5h1M199,137.5h5M211,137.5h5M312,137.5h1M204,138.5h7M313,138.5h1M314,139.5h1M316,142.5h1M317,143.5h1M318,144.5h1M319,145.5h1M321,148.5h1M323,151.5h1M324,152.5h1M326,155.5h1M328,158.5h1M330,161.5h1M331,162.5h1M333,165.5h1M335,168.5h1M338,173.5h1M340,176.5h1M342,179.5h1M345,184.5h1M347,187.5h1M351,194.5h1M354,199.5h1M358,206.5h1M361,211.5h1M363,214.5h1M365,217.5h1M366,218.5h1M920,247.5h3M916,248.5h4M923,248.5h4M913,249.5h3M927,249.5h3M911,250.5h2M930,250.5h2M909,251.5h2M932,251.5h2M906,252.5h3M934,252.5h2M902,253.5h4M936,253.5h1M899,254.5h3M937,254.5h1M897,255.5h2M938,255.5h2M895,256.5h2M940,256.5h1M892,257.5h3M941,257.5h1M888,258.5h4M942,258.5h1M886,259.5h2M943,259.5h1M884,260.5h2M944,260.5h1M882,261.5h2M945,261.5h1M880,262.5h2M946,262.5h1M878,263.5h2M947,263.5h1M874,264.5h4M948,264.5h1M871,265.5h3M949,265.5h1M867,266.5h4M864,267.5h3M862,268.5h2M860,269.5h2M858,270.5h2M856,271.5h2M854,272.5h2M852,273.5h2M850,274.5h2M848,275.5h2M846,276.5h2M843,277.5h3M839,278.5h4M836,279.5h3M832,280.5h4M829,281.5h3M825,282.5h4M822,283.5h3M820,284.5h2M818,285.5h2M815,286.5h3M811,287.5h4M809,288.5h2M807,289.5h2M805,290.5h2M803,291.5h2M801,292.5h2M799,293.5h2M797,294.5h2M795,295.5h2M793,296.5h2M791,297.5h2M789,298.5h2M788,299.5h1M787,300.5h1M786,301.5h1M785,302.5h1M783,305.5h1M782,306.5h1M781,307.5h1M779,308.5h2M777,309.5h2M775,310.5h2M774,311.5h1M772,312.5h2M770,313.5h2M768,314.5h2M767,315.5h1M765,316.5h2M763,317.5h2M761,318.5h2M760,319.5h1M758,320.5h2M756,321.5h2M754,322.5h2M753,323.5h1M751,324.5h2M750,325.5h1M749,326.5h1M747,327.5h2M746,328.5h1M744,329.5h2M742,330.5h2M740,331.5h2M739,332.5h1M737,333.5h2M735,334.5h2M733,335.5h2M732,336.5h1M730,337.5h2M728,338.5h2M726,339.5h2M724,340.5h2M722,341.5h2M720,342.5h2M718,343.5h2M716,344.5h2M715,345.5h1M714,346.5h1M712,347.5h2M711,348.5h1M709,349.5h2M707,350.5h2M705,351.5h2M704,352.5h1M703,353.5h1M702,354.5h1M431,355.5h1M700,355.5h2M699,356.5h1M698,357.5h1M697,358.5h1M695,359.5h2M694,360.5h1M693,361.5h1M435,362.5h1M691,362.5h2M690,363.5h1M689,364.5h1M688,365.5h1M687,366.5h1M438,367.5h1M686,367.5h1M685,368.5h1M684,369.5h1M683,370.5h1M681,371.5h2M680,372.5h1M679,373.5h1M677,374.5h2M676,375.5h1M675,376.5h1M674,377.5h1M672,378.5h2M671,379.5h1M445,380.5h1M670,380.5h1M446,381.5h2M669,381.5h1M448,382.5h2M667,382.5h2M450,383.5h2M666,383.5h1M452,384.5h1M665,384.5h1M453,385.5h2M663,385.5h2M455,386.5h1M662,386.5h1M456,387.5h1M660,387.5h2M457,388.5h2M659,388.5h1M459,389.5h1M658,389.5h1M460,390.5h1M656,390.5h2M461,391.5h1M610,391.5h14M655,391.5h1M462,392.5h2M582,392.5h28M624,392.5h7M653,392.5h2M464,393.5h1M568,393.5h14M631,393.5h7M651,393.5h2M465,394.5h1M563,394.5h5M638,394.5h7M649,394.5h2M466,395.5h1M559,395.5h4M645,395.5h4M467,396.5h2M556,396.5h3M469,397.5h2M552,397.5h4M471,398.5h2M547,398.5h5M473,399.5h2M542,399.5h5M475,400.5h2M540,400.5h2M477,401.5h2M538,401.5h2M479,402.5h3M535,402.5h3M482,403.5h4M531,403.5h4M486,404.5h5M528,404.5h3M491,405.5h5M526,405.5h2M496,406.5h4M524,406.5h2M500,407.5h3M521,407.5h3M503,408.5h2M517,408.5h4M505,409.5h2M512,409.5h5M507,410.5h5" fill="none" stroke="#ff00ff" stroke-width="1"/>
<path d="M76.5,65v2M79.5,69v2M84.5,75v2M89.5,81v2M91.5,84v2M94.5,88v2M96.5,91v2M97.5,93v2M98.5,95v2M100.5,98v2M101.5,100v2M103.5,103v2M105.5,106v2M108.5,110v2M112.5,115v2M117.5,121v2M118.5,123v2M119.5,125v2M121.5,128v2M122.5,130v2M305.5,136v2M306.5,138v3M307.5,141v3M308.5,144v4M309.5,148v3M310.5,151v3M311.5,154v3M312.5,157v3M313.5,160v3M314.5,163v3M315.5,166v3M316.5,169v2M317.5,171v3M318.5,174v3M319.5,177v3M320.5,180v3M321.5,183v2M322.5,185v3M323.5,188v3M324.5,191v2M325.5,193v3M326.5,196v3M327.5,199v3M328.5,202v2M329.5,204v3M330.5,207v3M331.5,210v2M332.5,212v3M333.5,215v3M334.5,218v3M335.5,221v2M336.5,223v3M337.5,226v3M338.5,229v2M339.5,231v3M340.5,234v3M341.5,237v3M342.5,240v2M343.5,242v3M344.5,245v3M345.5,248v2M346.5,250v3M347.5,253v3M348.5,256v3M349.5,259v2M350.5,261v3M351.5,264v3M352.5,267v2M353.5,269v3M354.5,272v3M355.5,275v3M356.5,278v3M357.5,281v3M358.5,284v2M359.5,286v3M360.5,289v3M361.5,292v3M362.5,295v2M363.5,297v3M364.5,300v3M365.5,303v2M366.5,305v3M367.5,308v2M368.5,310v3M369.5,313v4M370.5,317v3M371.5,320v4M372.5,324v4M373.5,328v3M374.5,331v4M375.5,335v2M376.5,337v2M378.5,340v2M379.5,342v2M381.5,345v2M382.5,347v2M383.5,349v2M384.5,351v2M385.5,353v2M386.5,355v2M387.5,357v2M388.5,359v2M390.5,362v2M392.5,365v2M393.5,367v2M395.5,370v2M398.5,374v2M401.5,378v2M404.5,382v2M406.5,385v2M409.5,389v2M412.5,393v2M415.5,397v2M420.5,403v2M427.5,411v2M434.5,419v2M651.5,396v2M656.5,390v2M657.5,388v2M658.5,386v2M660.5,383v2M661.5,381v2M663.5,378v2M664.5,376v2M665.5,374v2M666.5,372v2M667.5,370v2M668.5,368v2M669.5,366v2M670.5,364v2M671.5,362v2M672.5,360v2M673.5,358v2M674.5,356v2M675.5,354v2M677.5,351v2M678.5,349v2M679.5,347v2M680.5,345v2M681.5,343v2M682.5,341v2M684.5,338v2M685.5,336v2M686.5,334v2M687.5,332v2M688.5,330v2M689.5,328v2M691.5,325v2M692.5,323v2M693.5,321v2M695.5,318v2M696.5,316v2M698.5,313v2M700.5,310v2M703.5,306v2M705.5,303v2M707.5,300v2M708.5,298v2M710.5,295v2M713.5,291v2M716.5,287v2M789.5,311v2M791.5,308v2M794.5,304v2M796.5,301v2M797.5,299v2M798.5,297v2M799.5,295v2M800.5,293v2M801.5,291v2M803.5,288v2M805.5,285v2M806.5,283v2M808.5,280v2M810.5,277v2M812.5,274v2M815.5,270v2M817.5,267v2M819.5,264v2M822.5,260v2M826.5,255v2M840.5,240v2M868.5,234v2M875.5,242v2M60,52.5h1M61,53.5h2M63,54.5h1M64,55.5h1M65,56.5h2M67,57.5h1M68,58.5h1M69,59.5h1M70,60.5h2M72,61.5h1M73,62.5h1M74,63.5h1M75,64.5h1M77,67.5h1M78,68.5h1M80,71.5h1M81,72.5h1M82,73.5h1M83,74.5h1M85,77.5h1M86,78.5h1M87,79.5h1M88,80.5h1M90,83.5h1M92,86.5h1M93,87.5h1M95,90.5h1M99,97.5h1M102,102.5h1M104,105.5h1M106,108.5h1M107,109.5h1M109,112.5h1M110,113.5h1M248,113.5h5M111,114.5h1M246,114.5h2M253,114.5h7M244,115.5h2M260,115.5h7M242,116.5h2M267,116.5h4M113,117.5h1M240,117.5h2M271,117.5h2M114,118.5h1M239,118.5h1M273,118.5h2M115,119.5h1M238,119.5h1M275,119.5h2M116,120.5h1M236,120.5h2M277,120.5h1M234,121.5h2M278,121.5h2M230,122.5h4M280,122.5h2M227,123.5h3M282,123.5h2M225,124.5h2M284,124.5h1M223,125.5h2M285,125.5h2M221,126.5h2M287,126.5h1M120,127.5h1M219,127.5h2M288,127.5h1M218,128.5h1M289,128.5h2M217,129.5h1M291,129.5h2M215,130.5h2M293,130.5h2M213,131.5h2M295,131.5h2M123,132.5h1M211,132.5h2M297,132.5h2M124,133.5h2M209,133.5h2M299,133.5h2M126,134.5h1M206,134.5h3M301,134.5h2M127,135.5h1M202,135.5h4M303,135.5h2M128,136.5h2M197,136.5h5M130,137.5h1M192,137.5h5M131,138.5h2M190,138.5h2M133,139.5h2M188,139.5h2M135,140.5h2M185,140.5h3M137,141.5h2M181,141.5h4M139,142.5h2M179,142.5h2M141,143.5h2M148,143.5h5M177,143.5h2M143,144.5h5M153,144.5h2M175,144.5h2M155,145.5h2M162,145.5h7M173,145.5h2M157,146.5h5M169,146.5h4M855,228.5h5M851,229.5h4M860,229.5h2M850,230.5h1M862,230.5h2M849,231.5h1M864,231.5h2M848,232.5h1M866,232.5h1M847,233.5h1M867,233.5h1M846,234.5h1M845,235.5h1M844,236.5h1M869,236.5h1M843,237.5h1M870,237.5h1M842,238.5h1M871,238.5h1M841,239.5h1M872,239.5h1M873,240.5h1M874,241.5h1M839,242.5h1M838,243.5h1M837,244.5h1M876,244.5h1M836,245.5h1M877,245.5h1M835,246.5h1M878,246.5h1M834,247.5h1M879,247.5h2M833,248.5h1M881,248.5h4M832,249.5h1M885,249.5h2M831,250.5h1M887,250.5h2M830,251.5h1M889,251.5h1M829,252.5h1M890,252.5h1M828,253.5h1M891,253.5h2M827,254.5h1M893,254.5h2M895,255.5h2M897,256.5h2M825,257.5h1M899,257.5h3M824,258.5h1M902,258.5h4M823,259.5h1M906,259.5h3M909,260.5h2M911,261.5h2M821,262.5h1M913,262.5h3M820,263.5h1M916,263.5h2M918,264.5h2M920,265.5h2M818,266.5h1M922,266.5h2M924,267.5h2M926,268.5h2M816,269.5h1M928,269.5h1M929,270.5h2M931,271.5h2M814,272.5h1M933,272.5h2M813,273.5h1M935,273.5h1M936,274.5h2M938,275.5h2M811,276.5h1M940,276.5h2M942,277.5h1M943,278.5h1M809,279.5h1M944,279.5h1M945,280.5h2M947,281.5h1M807,282.5h1M948,282.5h1M949,283.5h1M718,285.5h2M717,286.5h1M720,286.5h4M724,287.5h2M804,287.5h1M726,288.5h1M715,289.5h1M727,289.5h1M714,290.5h1M728,290.5h2M802,290.5h1M730,291.5h1M731,292.5h1M712,293.5h1M732,293.5h2M711,294.5h1M734,294.5h2M736,295.5h2M738,296.5h2M709,297.5h1M740,297.5h1M741,298.5h1M742,299.5h2M744,300.5h1M745,301.5h1M706,302.5h1M746,302.5h1M747,303.5h2M795,303.5h1M749,304.5h1M704,305.5h1M750,305.5h1M751,306.5h2M793,306.5h1M753,307.5h1M792,307.5h1M702,308.5h1M754,308.5h2M701,309.5h1M756,309.5h2M758,310.5h2M790,310.5h1M760,311.5h2M699,312.5h1M762,312.5h2M764,313.5h2M788,313.5h1M766,314.5h2M787,314.5h1M697,315.5h1M768,315.5h2M786,315.5h1M770,316.5h2M784,316.5h2M772,317.5h2M783,317.5h1M774,318.5h4M782,318.5h1M778,319.5h4M694,320.5h1M690,327.5h1M377,339.5h1M683,340.5h1M380,344.5h1M676,353.5h1M389,361.5h1M391,364.5h1M394,369.5h1M396,372.5h1M397,373.5h1M399,376.5h1M400,377.5h1M402,380.5h1M662,380.5h1M403,381.5h1M543,381.5h4M542,382.5h1M547,382.5h5M541,383.5h1M552,383.5h4M405,384.5h1M539,384.5h2M556,384.5h3M538,385.5h1M559,385.5h4M659,385.5h1M537,386.5h1M563,386.5h3M407,387.5h1M535,387.5h2M566,387.5h4M408,388.5h1M533,388.5h2M570,388.5h3M531,389.5h2M573,389.5h4M528,390.5h3M577,390.5h5M410,391.5h1M524,391.5h4M582,391.5h5M411,392.5h1M521,392.5h3M587,392.5h4M655,392.5h1M517,393.5h4M591,393.5h3M654,393.5h1M514,394.5h3M594,394.5h4M653,394.5h1M413,395.5h1M510,395.5h4M598,395.5h3M652,395.5h1M414,396.5h1M507,396.5h3M601,396.5h4M505,397.5h2M605,397.5h3M503,398.5h2M608,398.5h2M650,398.5h1M416,399.5h1M500,399.5h3M610,399.5h2M649,399.5h1M417,400.5h1M498,400.5h2M612,400.5h26M645,400.5h4M418,401.5h1M496,401.5h2M638,401.5h7M419,402.5h1M494,402.5h2M493,403.5h1M492,404.5h1M421,405.5h1M490,405.5h2M422,406.5h1M489,406.5h1M423,407.5h1M488,407.5h1M424,408.5h1M487,408.5h1M425,409.5h1M485,409.5h2M426,410.5h1M484,410.5h1M483,411.5h1M481,412.5h2M428,413.5h1M480,413.5h1M429,414.5h1M478,414.5h2M430,415.5h1M476,415.5h2M431,416.5h1M474,416.5h2M432,417.5h1M459,417.5h15M433,418.5h1M457,418.5h2M456,419.5h1M455,420.5h1M435,421.5h1M453,421.5h2M436,422.5h1M451,422.5h2M437,423.5h1M447,423.5h4M438,424.5h9" fill="none" stroke="#ffff00" stroke-width="1"/>
<path d="M61.5,59v2M62.5,61v2M63.5,63v2M65.5,66v2M66.5,68v2M68.5,71v2M70.5,74v2M73.5,78v2M74.5,80v2M75.5,82v3M76.5,85v3M77.5,88v3M78.5,91v2M79.5,93v3M80.5,96v3M81.5,99v2M82.5,101v2M83.5,103v2M84.5,105v2M86.5,108v2M87.5,110v2M89.5,113v2M91.5,116v2M94.5,120v2M97.5,124v2M100.5,128v2M103.5,132v2M104.5,134v2M105.5,136v2M107.5,139v2M108.5,141v2M119.5,147v2M216.5,119v2M219.5,115v2M251.5,107v2M254.5,111v2M271.5,123v2M272.5,125v2M273.5,127v2M274.5,129v2M275.5,131v2M276.5,133v2M279.5,137v2M282.5,141v2M305.5,149v3M306.5,152v4M307.5,156v5M308.5,161v4M309.5,165v4M310.5,169v5M311.5,174v4M312.5,178v5M313.5,183v4M314.5,187v5M315.5,192v4M316.5,196v4M317.5,200v5M318.5,205v4M319.5,209v5M320.5,214v6M321.5,220v5M322.5,225v6M323.5,231v5M324.5,236v5M325.5,241v6M326.5,247v5M327.5,252v6M328.5,258v5M329.5,263v6M330.5,269v5M331.5,274v5M332.5,279v6M333.5,285v5M334.5,290v5M335.5,295v5M336.5,300v5M337.5,305v5M338.5,310v5M339.5,315v5M340.5,320v3M350.5,330v2M368.5,336v2M369.5,338v2M370.5,340v2M371.5,342v2M372.5,344v2M373.5,346v2M374.5,348v2M375.5,350v2M376.5,352v2M377.5,354v3M378.5,357v2M379.5,359v2M380.5,361v3M381.5,364v2M382.5,366v3M383.5,369v3M384.5,372v3M385.5,375v3M386.5,378v2M387.5,380v3M388.5,383v3M389.5,386v3M390.5,389v3M391.5,392v3M392.5,395v3M393.5,398v2M394.5,400v3M395.5,403v3M396.5,406v3M397.5,409v3M398.5,412v3M399.5,415v3M400.5,418v2M401.5,420v3M402.5,423v3M403.5,426v2M495.5,397v2M497.5,394v2M500.5,390v2M504.5,385v2M574.5,394v2M648.5,398v2M649.5,395v3M650.5,393v2M651.5,390v3M652.5,387v3M653.5,385v2M654.5,382v3M655.5,379v3M656.5,375v4M657.5,372v3M658.5,368v4M659.5,364v4M660.5,361v3M661.5,357v4M662.5,354v3M663.5,351v3M664.5,348v3M665.5,344v4M666.5,341v3M667.5,338v3M668.5,335v3M669.5,332v3M670.5,328v4M671.5,324v4M672.5,320v4M673.5,317v3M674.5,313v4M675.5,309v4M676.5,306v3M677.5,302v4M678.5,298v4M679.5,294v4M680.5,290v4M681.5,286v4M682.5,282v4M683.5,280v2M714.5,285v2M719.5,291v2M721.5,294v2M722.5,296v2M724.5,299v2M727.5,303v2M730.5,307v2M781.5,315v2M782.5,313v2M783.5,311v2M784.5,309v2M785.5,307v2M786.5,305v2M787.5,303v2M788.5,300v3M789.5,298v2M790.5,296v2M791.5,293v3M792.5,291v2M793.5,289v2M794.5,287v2M795.5,284v3M796.5,281v3M797.5,277v4M798.5,274v3M799.5,271v3M800.5,267v4M801.5,264v3M802.5,261v3M803.5,257v4M804.5,254v3M805.5,250v4M806.5,247v3M807.5,244v3M808.5,240v4M809.5,237v3M810.5,235v2M811.5,233v2M812.5,231v2M813.5,229v2M814.5,227v2M815.5,225v2M816.5,223v2M832.5,219v2M835.5,223v2M840.5,229v2M867.5,246v2M870.5,250v2M889.5,265v2M936.5,277v2M937.5,279v2M938.5,281v2M940.5,284v2M941.5,286v2M942.5,288v2M943.5,290v2M944.5,292v2M945.5,294v2M946.5,296v2M947.5,298v2M948.5,300v2M60,58.5h1M64,65.5h1M67,70.5h1M69,73.5h1M71,76.5h1M72,77.5h1M242,104.5h4M240,105.5h2M246,105.5h4M239,106.5h1M250,106.5h1M85,107.5h1M238,107.5h1M236,108.5h2M234,109.5h2M252,109.5h1M230,110.5h4M253,110.5h1M227,111.5h3M88,112.5h1M223,112.5h4M221,113.5h2M255,113.5h1M220,114.5h1M256,114.5h1M90,115.5h1M257,115.5h2M259,116.5h2M218,117.5h1M261,117.5h2M92,118.5h1M217,118.5h1M263,118.5h1M93,119.5h1M264,119.5h2M266,120.5h2M215,121.5h1M268,121.5h2M95,122.5h1M214,122.5h1M270,122.5h1M96,123.5h1M213,123.5h1M212,124.5h1M210,125.5h2M98,126.5h1M209,126.5h1M99,127.5h1M208,127.5h1M207,128.5h1M205,129.5h2M101,130.5h1M204,130.5h1M102,131.5h1M203,131.5h1M201,132.5h2M199,133.5h2M195,134.5h4M192,135.5h3M277,135.5h1M190,136.5h2M278,136.5h1M188,137.5h2M106,138.5h1M183,138.5h5M157,139.5h12M176,139.5h7M280,139.5h1M155,140.5h2M169,140.5h7M281,140.5h1M153,141.5h2M150,142.5h3M109,143.5h4M146,143.5h4M283,143.5h1M113,144.5h4M144,144.5h2M284,144.5h4M117,145.5h1M143,145.5h1M288,145.5h11M118,146.5h1M142,146.5h1M299,146.5h2M141,147.5h1M301,147.5h2M140,148.5h1M303,148.5h2M120,149.5h1M139,149.5h1M121,150.5h1M138,150.5h1M122,151.5h1M134,151.5h4M123,152.5h11M823,217.5h8M822,218.5h1M831,218.5h1M821,219.5h1M819,220.5h2M818,221.5h1M833,221.5h1M817,222.5h1M834,222.5h1M836,225.5h1M837,226.5h1M838,227.5h1M839,228.5h1M841,231.5h1M842,232.5h1M843,233.5h1M844,234.5h4M848,235.5h4M852,236.5h2M854,237.5h2M856,238.5h2M858,239.5h1M859,240.5h2M861,241.5h1M862,242.5h1M863,243.5h2M865,244.5h1M866,245.5h1M868,248.5h1M869,249.5h1M871,252.5h1M872,253.5h1M873,254.5h1M874,255.5h1M875,256.5h1M876,257.5h1M877,258.5h1M878,259.5h1M879,260.5h2M881,261.5h4M885,262.5h2M887,263.5h1M888,264.5h1M913,264.5h2M909,265.5h4M915,265.5h2M907,266.5h2M917,266.5h2M890,267.5h1M905,267.5h2M919,267.5h2M891,268.5h1M903,268.5h2M921,268.5h4M892,269.5h1M901,269.5h2M925,269.5h4M893,270.5h8M929,270.5h1M930,271.5h1M931,272.5h1M932,273.5h1M690,274.5h2M933,274.5h1M689,275.5h1M692,275.5h4M934,275.5h1M688,276.5h1M696,276.5h5M935,276.5h1M686,277.5h2M701,277.5h4M685,278.5h1M705,278.5h2M684,279.5h1M707,279.5h1M708,280.5h1M709,281.5h2M711,282.5h1M712,283.5h1M939,283.5h1M713,284.5h1M715,287.5h1M716,288.5h1M717,289.5h1M718,290.5h1M720,293.5h1M723,298.5h1M725,301.5h1M726,302.5h1M949,302.5h1M728,305.5h1M729,306.5h1M731,309.5h1M732,310.5h1M733,311.5h2M735,312.5h1M736,313.5h1M737,314.5h2M739,315.5h1M740,316.5h1M741,317.5h1M779,317.5h2M742,318.5h1M767,318.5h2M777,318.5h2M743,319.5h1M765,319.5h2M769,319.5h4M775,319.5h2M744,320.5h1M763,320.5h2M773,320.5h2M745,321.5h1M761,321.5h2M746,322.5h2M759,322.5h2M341,323.5h2M748,323.5h4M755,323.5h4M343,324.5h1M752,324.5h3M344,325.5h1M345,326.5h2M347,327.5h1M348,328.5h1M349,329.5h1M351,332.5h1M352,333.5h1M353,334.5h1M354,335.5h2M356,336.5h4M365,336.5h3M360,337.5h5M514,379.5h10M510,380.5h4M524,380.5h2M508,381.5h2M526,381.5h2M507,382.5h1M528,382.5h3M542,382.5h2M506,383.5h1M531,383.5h2M540,383.5h2M544,383.5h2M505,384.5h1M533,384.5h2M538,384.5h2M546,384.5h2M535,385.5h3M548,385.5h2M550,386.5h2M503,387.5h1M552,387.5h2M502,388.5h1M554,388.5h2M501,389.5h1M556,389.5h5M561,390.5h7M568,391.5h4M499,392.5h1M572,392.5h1M498,393.5h1M573,393.5h1M496,396.5h1M575,396.5h1M589,396.5h5M576,397.5h1M584,397.5h5M594,397.5h2M577,398.5h1M580,398.5h4M596,398.5h2M494,399.5h1M578,399.5h2M598,399.5h3M645,399.5h3M493,400.5h1M601,400.5h2M638,400.5h7M492,401.5h1M603,401.5h2M633,401.5h5M490,402.5h2M605,402.5h10M631,402.5h2M489,403.5h1M615,403.5h4M629,403.5h2M488,404.5h1M619,404.5h10M459,405.5h1M486,405.5h2M458,406.5h1M460,406.5h2M484,406.5h2M457,407.5h1M462,407.5h2M482,407.5h2M455,408.5h2M464,408.5h2M480,408.5h2M454,409.5h1M466,409.5h2M478,409.5h2M453,410.5h1M468,410.5h2M476,410.5h2M452,411.5h1M470,411.5h2M474,411.5h2M451,412.5h1M472,412.5h2M450,413.5h1M448,414.5h2M447,415.5h1M446,416.5h1M445,417.5h1M443,418.5h2M441,419.5h2M439,420.5h2M438,421.5h1M436,422.5h2M435,423.5h1M434,424.5h1M432,425.5h2M430,426.5h2M428,427.5h2M404,428.5h2M426,428.5h2M406,429.5h2M423,429.5h3M408,430.5h2M421,430.5h2M410,431.5h4M419,431.5h2M414,432.5h5" fill="none" stroke="#ffffff" stroke-width="1"/>
</g>
<g shape-rendering="crispEdges">
<path d="M704.5,514v9M705.5,523v17M706.5,540v17M707.5,557v17M708.5,574v16M709.5,590v17M710.5,607v17M711.5,624v9M712.5,607v17M713.5,590v17M714.5,573v17M715.5,557v16M716.5,540v17M717.5,523v17M718.5,514v9M60,514.5h644M719,514.5h231" fill="none" stroke="#ffff00" stroke-width="1"/>
<rect x="60" y="531" width="890" height="1" fill="#0000ff"/>
<rect x="60" y="632" width="890" height="1" fill="#00ffff"/>
<rect x="60" y="683" width="890" height="1" fill="#ff0000"/>
<rect x="60" y="683" width="1" height="1" fill="#fff"/>
<rect x="67" y="683" width="1" height="1" fill="#fff"/>
<rect x="74" y="683" width="1" height="1" fill="#fff"/>
<rect x="81" y="683" width="1" height="1" fill="#fff"/>
<rect x="88" y="683" width="1" height="1" fill="#fff"/>
<rect x="95" y="683" width="1" height="1" fill="#fff"/>
<rect x="102" y="683" width="1" height="1" fill="#fff"/>
<rect x="109" y="683" width="1" height="1" fill="#fff"/>
<rect x="116" y="683" width="1" height="1" fill="#fff"/>
<rect x="123" y="683" width="1" height="1" fill="#fff"/>
<rect x="130" y="683" width="1" height="1" fill="#fff"/>
<rect x="137" y="683" width="1" height="1" fill="#fff"/>
<rect x="144" y="683" width="1" height="1" fill="#fff"/>
<rect x="151" y="683" width="1" height="1" fill="#fff"/>
<rect x="158" y="683" width="1" height="1" fill="#fff"/>
<rect x="165" y="683" width="1" height="1" fill="#fff"/>
<rect x="172" y="683" width="1" height="1" fill="#fff"/>
<rect x="179" y="683" width="1" height="1" fill="#fff"/>
<rect x="186" y="683" width="1" height="1" fill="#fff"/>
<rect x="193" y="683" width="1" height="1" fill="#fff"/>
<rect x="200" y="683" width="1" height="1" fill="#fff"/>
<rect x="207" y="683" width="1" height="1" fill="#fff"/>
<rect x="214" y="683" width="1" height="1" fill="#fff"/>
<rect x="221" y="683" width="1" height="1" fill="#fff"/>
<rect x="228" y="683" width="1" height="1" fill="#fff"/>
<rect x="235" y="683" width="1" height="1" fill="#fff"/>
<rect x="242" y="683" width="1" height="1" fill="#fff"/>
<rect x="249" y="683" width="1" height="1" fill="#fff"/>
<rect x="256" y="683" width="1" height="1" fill="#fff"/>
<rect x="263" y="683" width="1" height="1" fill="#fff"/>
<rect x="270" y="683" width="1" height="1" fill="#fff"/>
<rect x="277" y="683" width="1" height="1" fill="#fff"/>
<rect x="284" y="683" width="1" height="1" fill="#fff"/>
<rect x="291" y="683" width="1" height="1" fill="#fff"/>
<rect x="298" y="683" width="1" height="1" fill="#fff"/>
<rect x="305" y="683" width="1" height="1" fill="#fff"/>
<rect x="312" y="683" width="1" height="1" fill="#fff"/>
<rect x="319" y="683" width="1" height="1" fill="#fff"/>
<rect x="326" y="683" width="1" height="1" fill="#fff"/>
<rect x="333" y="683" width="1" height="1" fill="#fff"/>
<rect x="340" y="683" width="1" height="1" fill="#fff"/>
<rect x="347" y="683" width="1" height="1" fill="#fff"/>
<rect x="354" y="683" width="1" height="1" fill="#fff"/>
<rect x="361" y="683" width="1" height="1" fill="#fff"/>
<rect x="368" y="683" width="1" height="1" fill="#fff"/>
<rect x="375" y="683" width="1" height="1" fill="#fff"/>
<rect x="382" y="683" width="1" height="1" fill="#fff"/>
<rect x="389" y="683" width="1" height="1" fill="#fff"/>
<rect x="396" y="683" width="1" height="1" fill="#fff"/>
<rect x="403" y="683" width="1" height="1" fill="#fff"/>
<rect x="410" y="683" width="1" height="1" fill="#fff"/>
<rect x="417" y="683" width="1" height="1" fill="#fff"/>
<rect x="424" y="683" width="1" height="1" fill="#fff"/>
<rect x="431" y="683" width="1" height="1" fill="#fff"/>
<rect x="438" y="683" width="1" height="1" fill="#fff"/>
<rect x="445" y="683" width="1" height="1" fill="#fff"/>
<rect x="452" y="683" width="1" height="1" fill="#fff"/>
<rect x="459" y="683" width="1" height="1" fill="#fff"/>
<rect x="466" y="683" width="1" height="1" fill="#fff"/>
<rect x="473" y="683" width="1" height="1" fill="#fff"/>
<rect x="480" y="683" width="1" height="1" fill="#fff"/>
<rect x="487" y="683" width="1" height="1" fill="#fff"/>
<rect x="494" y="683" width="1" height="1" fill="#fff"/>
<rect x="501" y="683" width="1" height="1" fill="#fff"/>
<rect x="508" y="683" width="1" height="1" fill="#fff"/>
<rect x="515" y="683" width="1" height="1" fill="#fff"/>
<rect x="522" y="683" width="1" height="1" fill="#fff"/>
<rect x="529" y="683" width="1" height="1" fill="#fff"/>
<rect x="536" y="683" width="1" height="1" fill="#fff"/>
<rect x="543" y="683" width="1" height="1" fill="#fff"/>
<rect x="550" y="683" width="1" height="1" fill="#fff"/>
<rect x="557" y="683" width="1" height="1" fill="#fff"/>
<rect x="564" y="683" width="1" height="1" fill="#fff"/>
<rect x="571" y="683" width="1" height="1" fill="#fff"/>
<rect x="578" y="683" width="1" height="1" fill="#fff"/>
<rect x="585" y="683" width="1" height="1" fill="#fff"/>
<rect x="592" y="683" width="1" height="1" fill="#fff"/>
<rect x="599" y="683" width="1" height="1" fill="#fff"/>
<rect x="606" y="683" width="1" height="1" fill="#fff"/>
<rect x="613" y="683" width="1" height="1" fill="#fff"/>
<rect x="620" y="683" width="1" height="1" fill="#fff"/>
<rect x="627" y="683" width="1" height="1" fill="#fff"/>
<rect x="634" y="683" width="1" height="1" fill="#fff"/>
<rect x="641" y="683" width="1" height="1" fill="#fff"/>
<rect x="648" y="683" width="1" height="1" fill="#fff"/>
<rect x="655" y="683" width="1" height="1" fill="#fff"/>
<rect x="662" y="683" width="1" height="1" fill="#fff"/>
<rect x="669" y="683" width="1" height="1" fill="#fff"/>
<rect x="676" y="683" width="1" height="1" fill="#fff"/>
<rect x="683" y="683" width="1" height="1" fill="#fff"/>
<rect x="690" y="683" width="1" height="1" fill="#fff"/>
<rect x="697" y="683" width="1" height="1" fill="#fff"/>
<rect x="704" y="683" width="1" height="1" fill="#fff"/>
<rect x="711" y="683" width="1" height="1" fill="#fff"/>
<rect x="718" y="683" width="1" height="1" fill="#fff"/>
<rect x="725" y="683" width="1" height="1" fill="#fff"/>
<rect x="732" y="683" width="1" height="1" fill="#fff"/>
<rect x="739" y="683" width="1" height="1" fill="#fff"/>
<rect x="746" y="683" width="1" height="1" fill="#fff"/>
<rect x="753" y="683" width="1" height="1" fill="#fff"/>
<rect x="760" y="683" width="1" height="1" fill="#fff"/>
<rect x="767" y="683" width="1" height="1" fill="#fff"/>
<rect x="774" y="683" width="1" height="1" fill="#fff"/>
<rect x="781" y="683" width="1" height="1" fill="#fff"/>
<rect x="788" y="683" width="1" height="1" fill="#fff"/>
<rect x="795" y="683" width="1" height="1" fill="#fff"/>
<rect x="802" y="683" width="1" height="1" fill="#fff"/>
<rect x="809" y="683" width="1" height="1" fill="#fff"/>
<rect x="816" y="683" width="1" height="1" fill="#fff"/>
<rect x="823" y="683" width="1" height="1" fill="#fff"/>
<rect x="830" y="683" width="1" height="1" fill="#fff"/>
<rect x="837" y="683" width="1" height="1" fill="#fff"/>
<rect x="844" y="683" width="1" height="1" fill="#fff"/>
<rect x="851" y="683" width="1" height="1" fill="#fff"/>
<rect x="858" y="683" width="1" height="1" fill="#fff"/>
<rect x="865" y="683" width="1" height="1" fill="#fff"/>
<rect x="872" y="683" width="1" height="1" fill="#fff"/>
<rect x="879" y="683" width="1" height="1" fill="#fff"/>
<rect x="886" y="683" width="1" height="1" fill="#fff"/>
<rect x="893" y="683" width="1" height="1" fill="#fff"/>
<rect x="900" y="683" width="1" height="1" fill="#fff"/>
<rect x="907" y="683" width="1" height="1" fill="#fff"/>
<rect x="914" y="683" width="1" height="1" fill="#fff"/>
<rect x="921" y="683" width="1" height="1" fill="#fff"/>
<rect x="928" y="683" width="1" height="1" fill="#fff"/>
<rect x="935" y="683" width="1" height="1" fill="#fff"/>
<rect x="942" y="683" width="1" height="1" fill="#fff"/>
<rect x="949" y="683" width="1" height="1" fill="#fff"/>
</g>
<polyline points="368.5,683.5 375.5,565 382.5,683.5" fill="none" stroke="#e80000" stroke-width="1.3"/>
<polyline points="396.5,683.5 403.5,565 410.5,683.5" fill="none" stroke="#e80000" stroke-width="1.3"/>
<g shape-rendering="crispEdges">
<path d="M76.5,569v2M79.5,573v2M91.5,586v2M103.5,598v2M104.5,600v2M105.5,602v2M107.5,605v2M108.5,607v2M110.5,610v2M112.5,613v2M113.5,615v2M115.5,618v2M117.5,621v2M119.5,624v2M122.5,628v2M208.5,627v2M209.5,625v2M210.5,623v2M212.5,620v2M213.5,618v2M214.5,616v2M215.5,614v2M216.5,611v3M217.5,609v2M218.5,607v2M219.5,604v3M220.5,602v2M221.5,600v2M224.5,596v2M266.5,590v2M271.5,596v2M272.5,598v2M273.5,600v2M274.5,602v2M275.5,604v2M276.5,606v2M278.5,609v2M280.5,612v2M281.5,614v2M283.5,617v2M301.5,630v2M481.5,639v2M483.5,636v2M486.5,632v2M488.5,629v2M490.5,626v2M491.5,624v2M493.5,621v2M504.5,609v2M511.5,601v2M518.5,593v2M525.5,585v2M539.5,571v2M650.5,604v2M653.5,600v2M656.5,596v2M657.5,594v2M658.5,592v2M659.5,590v2M660.5,588v2M661.5,586v2M663.5,583v2M664.5,581v2M665.5,579v2M666.5,577v2M667.5,575v2M668.5,573v2M670.5,570v2M672.5,567v2M675.5,563v2M679.5,558v2M728.5,552v2M791.5,565v2M868.5,568v2M936.5,612v2M938.5,615v2M939.5,617v2M941.5,620v2M943.5,623v2M945.5,626v2M946.5,628v2M948.5,631v2M703,542.5h10M699,543.5h4M713,543.5h2M696,544.5h3M715,544.5h2M694,545.5h2M717,545.5h2M692,546.5h2M719,546.5h2M690,547.5h2M721,547.5h2M813,547.5h14M689,548.5h1M723,548.5h2M809,548.5h4M827,548.5h5M688,549.5h1M725,549.5h1M808,549.5h1M832,549.5h2M687,550.5h1M726,550.5h1M807,550.5h1M834,550.5h2M686,551.5h1M727,551.5h1M805,551.5h2M836,551.5h2M685,552.5h1M804,552.5h1M838,552.5h2M684,553.5h1M803,553.5h1M840,553.5h2M683,554.5h1M729,554.5h1M802,554.5h1M842,554.5h2M682,555.5h1M730,555.5h1M801,555.5h1M844,555.5h2M60,556.5h1M681,556.5h1M731,556.5h1M800,556.5h1M846,556.5h4M61,557.5h2M680,557.5h1M732,557.5h1M799,557.5h1M850,557.5h3M63,558.5h1M733,558.5h1M798,558.5h1M853,558.5h4M64,559.5h1M734,559.5h1M797,559.5h1M857,559.5h2M65,560.5h2M678,560.5h1M735,560.5h2M796,560.5h1M859,560.5h1M67,561.5h1M677,561.5h1M737,561.5h1M795,561.5h1M860,561.5h1M68,562.5h1M676,562.5h1M738,562.5h1M794,562.5h1M861,562.5h2M69,563.5h1M739,563.5h1M793,563.5h1M863,563.5h1M70,564.5h2M740,564.5h2M792,564.5h1M864,564.5h1M72,565.5h1M674,565.5h1M742,565.5h1M865,565.5h1M73,566.5h1M547,566.5h5M673,566.5h1M743,566.5h1M866,566.5h1M74,567.5h1M543,567.5h4M552,567.5h4M744,567.5h2M790,567.5h1M867,567.5h1M75,568.5h1M542,568.5h1M556,568.5h3M746,568.5h2M789,568.5h1M541,569.5h1M559,569.5h2M671,569.5h1M748,569.5h2M788,569.5h1M540,570.5h1M561,570.5h2M750,570.5h2M787,570.5h1M869,570.5h1M77,571.5h1M563,571.5h3M752,571.5h3M786,571.5h1M870,571.5h1M78,572.5h1M566,572.5h2M669,572.5h1M755,572.5h4M784,572.5h2M871,572.5h1M538,573.5h1M568,573.5h2M759,573.5h5M783,573.5h1M872,573.5h1M537,574.5h1M570,574.5h2M764,574.5h7M782,574.5h1M873,574.5h1M80,575.5h1M536,575.5h1M572,575.5h1M771,575.5h11M874,575.5h1M81,576.5h1M535,576.5h1M573,576.5h1M875,576.5h1M82,577.5h1M249,577.5h2M534,577.5h1M574,577.5h2M876,577.5h1M83,578.5h1M247,578.5h2M251,578.5h2M532,578.5h2M576,578.5h1M877,578.5h1M84,579.5h1M246,579.5h1M253,579.5h2M531,579.5h1M577,579.5h1M878,579.5h1M85,580.5h1M245,580.5h1M255,580.5h2M530,580.5h1M578,580.5h2M879,580.5h1M86,581.5h1M243,581.5h2M257,581.5h1M529,581.5h1M580,581.5h2M880,581.5h2M87,582.5h1M242,582.5h1M258,582.5h1M528,582.5h1M582,582.5h2M882,582.5h2M88,583.5h1M241,583.5h1M259,583.5h1M527,583.5h1M584,583.5h3M884,583.5h2M89,584.5h1M240,584.5h1M260,584.5h1M526,584.5h1M587,584.5h4M886,584.5h1M90,585.5h1M239,585.5h1M261,585.5h1M591,585.5h2M662,585.5h1M887,585.5h2M238,586.5h1M262,586.5h1M593,586.5h2M889,586.5h2M237,587.5h1M263,587.5h1M524,587.5h1M595,587.5h2M891,587.5h2M92,588.5h1M236,588.5h1M264,588.5h1M523,588.5h1M597,588.5h2M893,588.5h2M93,589.5h1M234,589.5h2M265,589.5h1M522,589.5h1M599,589.5h1M895,589.5h4M94,590.5h1M232,590.5h2M521,590.5h1M600,590.5h1M899,590.5h3M95,591.5h1M230,591.5h2M520,591.5h1M601,591.5h1M902,591.5h4M96,592.5h1M228,592.5h2M267,592.5h1M519,592.5h1M602,592.5h2M906,592.5h3M97,593.5h1M227,593.5h1M268,593.5h1M604,593.5h1M909,593.5h2M98,594.5h2M226,594.5h1M269,594.5h1M605,594.5h1M911,594.5h2M100,595.5h1M225,595.5h1M270,595.5h1M517,595.5h1M606,595.5h1M913,595.5h2M101,596.5h1M516,596.5h1M607,596.5h2M915,596.5h2M102,597.5h1M515,597.5h1M609,597.5h2M917,597.5h2M223,598.5h1M514,598.5h1M611,598.5h2M655,598.5h1M919,598.5h2M222,599.5h1M513,599.5h1M613,599.5h2M654,599.5h1M921,599.5h1M512,600.5h1M615,600.5h4M922,600.5h2M619,601.5h3M924,601.5h1M622,602.5h4M631,602.5h5M652,602.5h1M925,602.5h1M510,603.5h1M626,603.5h5M636,603.5h2M651,603.5h1M926,603.5h2M106,604.5h1M509,604.5h1M638,604.5h2M928,604.5h1M508,605.5h1M640,605.5h3M929,605.5h1M507,606.5h1M643,606.5h4M649,606.5h1M930,606.5h1M506,607.5h1M647,607.5h2M931,607.5h1M277,608.5h1M505,608.5h1M932,608.5h1M109,609.5h1M933,609.5h1M934,610.5h1M279,611.5h1M503,611.5h1M935,611.5h1M111,612.5h1M502,612.5h1M501,613.5h1M500,614.5h1M937,614.5h1M499,615.5h1M282,616.5h1M498,616.5h1M114,617.5h1M497,617.5h1M496,618.5h1M284,619.5h1M495,619.5h1M940,619.5h1M116,620.5h1M285,620.5h2M494,620.5h1M287,621.5h2M211,622.5h1M289,622.5h2M942,622.5h1M118,623.5h1M291,623.5h1M492,623.5h1M292,624.5h2M294,625.5h2M944,625.5h1M120,626.5h1M296,626.5h2M121,627.5h1M298,627.5h1M299,628.5h1M489,628.5h1M207,629.5h1M300,629.5h1M123,630.5h1M206,630.5h1M947,630.5h1M124,631.5h1M205,631.5h1M487,631.5h1M125,632.5h1M204,632.5h1M302,632.5h1M126,633.5h1M203,633.5h1M303,633.5h1M949,633.5h1M127,634.5h1M202,634.5h1M304,634.5h1M485,634.5h1M128,635.5h1M201,635.5h1M305,635.5h1M484,635.5h1M129,636.5h1M199,636.5h2M306,636.5h1M130,637.5h2M195,637.5h4M307,637.5h1M132,638.5h2M192,638.5h3M308,638.5h2M482,638.5h1M134,639.5h2M190,639.5h2M310,639.5h1M136,640.5h5M188,640.5h2M311,640.5h1M141,641.5h7M185,641.5h3M312,641.5h1M480,641.5h1M148,642.5h7M181,642.5h4M313,642.5h2M479,642.5h1M155,643.5h7M178,643.5h3M315,643.5h1M478,643.5h1M162,644.5h7M174,644.5h4M316,644.5h1M477,644.5h1M169,645.5h5M317,645.5h2M476,645.5h1M319,646.5h1M475,646.5h1M320,647.5h2M474,647.5h1M322,648.5h1M472,648.5h2M323,649.5h1M470,649.5h2M324,650.5h2M468,650.5h2M326,651.5h1M465,651.5h3M327,652.5h2M463,652.5h2M329,653.5h1M461,653.5h2M330,654.5h1M459,654.5h2M331,655.5h2M457,655.5h2M333,656.5h1M456,656.5h1M334,657.5h2M455,657.5h1M336,658.5h2M453,658.5h2M338,659.5h2M451,659.5h2M340,660.5h1M449,660.5h2M341,661.5h2M447,661.5h2M343,662.5h2M442,662.5h5M345,663.5h2M437,663.5h5M347,664.5h2M433,664.5h4M349,665.5h4M430,665.5h3M353,666.5h3M426,666.5h4M356,667.5h4M372,667.5h14M400,667.5h26M360,668.5h12M386,668.5h14" fill="none" stroke="#ffff00" stroke-width="1"/>
<path d="M63.5,566v2M70.5,574v2M74.5,579v2M75.5,581v2M76.5,583v2M77.5,585v2M78.5,587v2M79.5,589v2M80.5,591v2M91.5,601v2M102.5,610v2M103.5,612v3M104.5,615v4M105.5,619v3M106.5,622v3M107.5,625v4M108.5,629v3M109.5,632v2M112.5,636v2M117.5,642v2M119.5,645v2M120.5,647v2M122.5,650v2M200.5,630v2M201.5,628v2M202.5,626v2M203.5,623v3M204.5,621v2M205.5,619v2M206.5,617v2M207.5,614v3M208.5,611v3M209.5,608v3M210.5,604v4M211.5,601v3M212.5,598v3M213.5,595v3M214.5,592v3M215.5,588v4M216.5,584v4M217.5,580v4M218.5,577v3M219.5,573v4M220.5,569v4M221.5,567v2M222.5,568v2M224.5,571v2M227.5,575v2M236.5,579v2M237.5,577v2M238.5,575v2M240.5,572v2M241.5,570v2M249.5,568v2M250.5,570v2M251.5,572v2M252.5,574v2M253.5,576v2M254.5,578v2M255.5,580v2M256.5,582v2M257.5,584v3M258.5,587v3M259.5,590v3M260.5,593v2M261.5,595v3M262.5,598v3M263.5,601v2M265.5,604v2M268.5,608v2M270.5,611v2M271.5,613v3M272.5,616v4M273.5,620v3M274.5,623v3M275.5,626v4M276.5,630v3M277.5,633v2M299.5,637v2M300.5,639v2M301.5,641v2M303.5,644v2M304.5,646v2M453.5,653v2M455.5,650v2M456.5,648v2M458.5,645v2M473.5,641v2M474.5,639v2M475.5,637v2M476.5,634v3M477.5,632v2M478.5,630v2M479.5,628v2M480.5,626v2M481.5,624v2M482.5,622v2M483.5,620v2M485.5,617v2M486.5,615v2M487.5,613v2M488.5,611v2M489.5,609v2M490.5,607v2M491.5,605v2M492.5,603v2M493.5,601v2M494.5,599v2M515.5,585v2M516.5,583v2M517.5,581v2M518.5,579v2M519.5,577v2M520.5,575v2M521.5,573v2M536.5,564v2M537.5,562v2M538.5,560v2M539.5,558v2M540.5,556v2M541.5,554v2M542.5,552v2M543.5,550v2M544.5,551v2M545.5,553v2M546.5,555v2M547.5,557v2M548.5,559v2M549.5,561v2M552.5,565v2M555.5,569v2M572.5,583v2M574.5,586v2M577.5,590v2M595.5,592v2M601.5,599v2M604.5,603v2M636.5,603v2M639.5,607v2M648.5,608v3M649.5,604v4M650.5,600v4M651.5,596v4M652.5,592v4M653.5,588v4M654.5,584v4M655.5,580v4M656.5,577v3M657.5,574v3M658.5,571v3M659.5,568v3M660.5,565v3M661.5,562v3M662.5,560v2M663.5,558v2M665.5,555v2M666.5,553v2M668.5,550v2M719.5,550v2M721.5,553v2M722.5,555v2M724.5,558v2M726.5,561v2M728.5,564v2M729.5,566v2M731.5,569v2M781.5,574v2M782.5,571v3M783.5,569v2M784.5,566v3M785.5,563v3M786.5,561v2M787.5,558v3M788.5,556v2M789.5,554v2M791.5,551v2M792.5,549v2M794.5,546v2M810.5,537v2M812.5,540v2M815.5,544v2M832.5,551v2M835.5,555v2M860.5,567v2M863.5,571v2M865.5,574v2M866.5,576v2M867.5,578v2M868.5,580v2M869.5,582v2M870.5,584v2M871.5,586v2M872.5,588v2M923.5,607v2M926.5,611v2M928.5,614v2M929.5,616v2M930.5,618v2M931.5,620v2M932.5,622v2M933.5,624v2M934.5,626v2M935.5,628v2M936.5,630v2M937.5,632v3M938.5,635v2M939.5,637v2M940.5,639v3M941.5,642v2M942.5,644v2M945.5,648v2M689,533.5h3M687,534.5h2M692,534.5h2M685,535.5h2M694,535.5h2M683,536.5h2M696,536.5h3M808,536.5h2M682,537.5h1M699,537.5h2M806,537.5h2M681,538.5h1M701,538.5h2M804,538.5h2M679,539.5h2M703,539.5h3M802,539.5h2M811,539.5h1M678,540.5h1M706,540.5h2M801,540.5h1M677,541.5h1M708,541.5h2M800,541.5h1M676,542.5h1M710,542.5h2M798,542.5h2M813,542.5h1M675,543.5h1M712,543.5h1M797,543.5h1M814,543.5h1M674,544.5h1M713,544.5h1M796,544.5h1M673,545.5h1M714,545.5h1M795,545.5h1M672,546.5h1M715,546.5h1M816,546.5h9M671,547.5h1M716,547.5h1M825,547.5h2M670,548.5h1M717,548.5h1M793,548.5h1M827,548.5h2M669,549.5h1M718,549.5h1M829,549.5h2M831,550.5h1M667,552.5h1M720,552.5h1M790,553.5h1M833,553.5h1M834,554.5h1M664,557.5h1M723,557.5h1M836,557.5h1M837,558.5h1M838,559.5h2M725,560.5h1M840,560.5h2M842,561.5h2M844,562.5h2M60,563.5h1M550,563.5h1M727,563.5h1M846,563.5h4M61,564.5h1M551,564.5h1M850,564.5h5M62,565.5h1M529,565.5h7M855,565.5h4M528,566.5h1M859,566.5h1M527,567.5h1M553,567.5h1M64,568.5h1M246,568.5h3M526,568.5h1M554,568.5h1M730,568.5h1M65,569.5h1M242,569.5h4M525,569.5h1M861,569.5h1M66,570.5h1M223,570.5h1M524,570.5h1M862,570.5h1M67,571.5h1M523,571.5h1M556,571.5h1M732,571.5h4M68,572.5h1M522,572.5h1M557,572.5h1M736,572.5h4M69,573.5h1M225,573.5h1M558,573.5h2M740,573.5h1M864,573.5h1M226,574.5h1M239,574.5h1M560,574.5h2M741,574.5h1M562,575.5h2M742,575.5h1M780,575.5h1M71,576.5h1M564,576.5h1M743,576.5h1M778,576.5h2M72,577.5h1M228,577.5h1M565,577.5h1M744,577.5h1M759,577.5h12M776,577.5h2M73,578.5h1M229,578.5h2M566,578.5h1M745,578.5h1M755,578.5h4M771,578.5h5M231,579.5h2M567,579.5h2M746,579.5h9M233,580.5h2M569,580.5h1M235,581.5h1M570,581.5h1M571,582.5h1M573,585.5h1M514,586.5h1M512,587.5h2M510,588.5h2M575,588.5h1M585,588.5h4M508,589.5h2M576,589.5h1M583,589.5h2M589,589.5h4M506,590.5h2M581,590.5h2M593,590.5h1M873,590.5h1M505,591.5h1M579,591.5h2M594,591.5h1M874,591.5h1M504,592.5h1M578,592.5h1M875,592.5h2M885,592.5h2M81,593.5h1M502,593.5h2M877,593.5h1M883,593.5h2M887,593.5h2M82,594.5h2M501,594.5h1M596,594.5h1M878,594.5h1M881,594.5h2M889,594.5h1M84,595.5h1M499,595.5h2M597,595.5h1M879,595.5h2M890,595.5h1M85,596.5h1M498,596.5h1M598,596.5h1M891,596.5h2M897,596.5h7M86,597.5h2M497,597.5h1M599,597.5h1M893,597.5h4M904,597.5h5M88,598.5h1M495,598.5h2M600,598.5h1M909,598.5h4M89,599.5h1M913,599.5h2M90,600.5h1M915,600.5h1M602,601.5h1M634,601.5h1M916,601.5h1M603,602.5h1M633,602.5h1M635,602.5h1M917,602.5h2M92,603.5h1M264,603.5h1M632,603.5h1M919,603.5h1M93,604.5h1M631,604.5h1M920,604.5h1M94,605.5h1M605,605.5h1M630,605.5h1M637,605.5h1M921,605.5h1M95,606.5h1M266,606.5h1M606,606.5h4M617,606.5h5M629,606.5h1M638,606.5h1M922,606.5h1M96,607.5h2M267,607.5h1M610,607.5h7M622,607.5h4M628,607.5h1M98,608.5h2M626,608.5h2M100,609.5h2M640,609.5h1M924,609.5h1M269,610.5h1M641,610.5h7M925,610.5h1M927,613.5h1M484,619.5h1M199,631.5h1M195,632.5h4M192,633.5h3M110,634.5h1M190,634.5h2M111,635.5h1M188,635.5h2M278,635.5h1M291,635.5h4M186,636.5h2M279,636.5h1M289,636.5h2M295,636.5h4M184,637.5h2M280,637.5h2M288,637.5h1M113,638.5h1M182,638.5h2M282,638.5h1M287,638.5h1M114,639.5h1M180,639.5h2M283,639.5h1M285,639.5h2M115,640.5h1M179,640.5h1M284,640.5h1M116,641.5h1M178,641.5h1M150,642.5h2M177,642.5h1M472,642.5h1M146,643.5h4M152,643.5h2M175,643.5h2M302,643.5h1M470,643.5h2M118,644.5h1M143,644.5h3M154,644.5h2M174,644.5h1M459,644.5h4M468,644.5h2M141,645.5h2M156,645.5h2M162,645.5h7M173,645.5h1M463,645.5h5M139,646.5h2M158,646.5h4M169,646.5h4M943,646.5h1M136,647.5h3M457,647.5h1M944,647.5h1M134,648.5h2M305,648.5h1M121,649.5h1M132,649.5h2M306,649.5h1M129,650.5h3M307,650.5h1M946,650.5h1M125,651.5h4M308,651.5h2M947,651.5h1M123,652.5h2M310,652.5h1M454,652.5h1M948,652.5h1M311,653.5h1M949,653.5h1M312,654.5h2M314,655.5h4M451,655.5h2M318,656.5h2M449,656.5h2M320,657.5h1M447,657.5h2M321,658.5h1M442,658.5h5M322,659.5h2M438,659.5h4M324,660.5h1M436,660.5h2M325,661.5h1M434,661.5h2M326,662.5h1M432,662.5h2M327,663.5h2M430,663.5h2M329,664.5h2M428,664.5h2M331,665.5h2M426,665.5h2M333,666.5h2M374,666.5h5M407,666.5h19M335,667.5h4M372,667.5h2M379,667.5h5M400,667.5h7M339,668.5h5M370,668.5h2M384,668.5h4M393,668.5h7M344,669.5h5M367,669.5h3M388,669.5h5M349,670.5h4M363,670.5h4M353,671.5h10" fill="none" stroke="#ffffff" stroke-width="1"/>
<path d="M61.5,578v2M62.5,580v2M63.5,582v2M64.5,584v2M65.5,586v2M66.5,588v2M67.5,590v2M68.5,592v2M69.5,594v2M70.5,596v2M71.5,598v2M72.5,600v2M73.5,602v2M74.5,604v2M75.5,606v3M76.5,609v4M77.5,613v3M78.5,616v3M79.5,619v4M80.5,623v3M81.5,626v2M102.5,636v4M103.5,640v6M104.5,646v7M105.5,653v6M106.5,659v6M107.5,665v7M108.5,672v6M109.5,678v4M117.5,684v2M118.5,686v2M119.5,688v2M121.5,691v2M122.5,693v2M123.5,694v2M124.5,692v2M125.5,689v3M126.5,686v3M127.5,684v2M128.5,681v3M129.5,679v2M130.5,676v3M131.5,674v2M132.5,672v2M133.5,669v3M134.5,667v2M135.5,665v2M136.5,663v2M137.5,661v2M138.5,659v2M140.5,656v2M143.5,652v2M147.5,647v2M152.5,644v2M154.5,647v2M157.5,651v2M172.5,646v2M173.5,644v2M174.5,642v2M175.5,640v2M176.5,638v2M177.5,636v2M178.5,634v2M200.5,619v3M201.5,614v5M202.5,610v4M203.5,605v5M204.5,600v5M205.5,596v4M206.5,591v5M207.5,586v5M208.5,580v6M209.5,574v6M210.5,568v6M211.5,562v6M212.5,556v6M213.5,550v6M214.5,544v6M215.5,537v7M216.5,531v6M217.5,524v7M218.5,517v7M219.5,511v6M220.5,504v7M221.5,500v4M222.5,504v7M223.5,511v6M224.5,517v7M225.5,524v7M226.5,531v6M227.5,537v7M228.5,544v5M229.5,549v3M230.5,552v2M231.5,554v3M232.5,557v3M233.5,560v2M234.5,562v3M235.5,565v2M236.5,562v3M237.5,558v4M238.5,555v3M239.5,552v3M240.5,548v4M241.5,545v3M242.5,543v2M249.5,549v3M250.5,552v6M251.5,558v5M252.5,563v6M253.5,569v5M254.5,574v5M255.5,579v6M256.5,585v6M257.5,591v6M258.5,597v6M259.5,603v7M260.5,610v6M261.5,616v6M262.5,622v6M263.5,628v4M264.5,632v2M265.5,634v2M266.5,636v2M268.5,639v2M269.5,641v2M270.5,643v4M271.5,647v6M272.5,653v6M273.5,659v6M274.5,665v6M275.5,671v6M276.5,677v6M277.5,683v3M284.5,682v2M285.5,678v4M286.5,675v3M287.5,671v4M288.5,667v4M289.5,664v3M290.5,660v4M291.5,658v2M298.5,653v2M299.5,655v3M300.5,658v3M301.5,661v3M302.5,664v3M303.5,667v3M304.5,670v3M305.5,673v2M370.5,669v2M373.5,665v2M452.5,645v2M453.5,642v3M454.5,638v4M455.5,635v3M456.5,632v3M457.5,628v4M458.5,625v3M459.5,623v2M461.5,625v2M464.5,629v2M473.5,627v3M474.5,623v4M475.5,618v5M476.5,613v5M477.5,609v4M478.5,604v5M479.5,600v4M480.5,596v4M481.5,593v3M482.5,591v2M483.5,588v3M484.5,585v3M485.5,583v2M486.5,580v3M487.5,577v3M488.5,574v3M489.5,571v3M490.5,568v3M491.5,565v3M492.5,562v3M493.5,559v3M494.5,557v2M515.5,563v2M516.5,559v4M517.5,555v4M518.5,551v4M519.5,548v3M520.5,544v4M521.5,540v4M522.5,538v2M530.5,534v2M532.5,537v2M533.5,539v2M535.5,542v2M536.5,542v3M537.5,538v4M538.5,534v4M539.5,530v4M540.5,526v4M541.5,522v4M542.5,518v4M543.5,515v4M544.5,519v6M545.5,525v6M546.5,531v7M547.5,538v6M548.5,544v6M549.5,550v6M550.5,556v5M551.5,561v3M552.5,564v3M553.5,567v3M554.5,570v3M555.5,573v3M556.5,576v3M557.5,579v2M565.5,588v2M567.5,591v2M570.5,595v2M571.5,597v2M572.5,599v2M573.5,601v3M574.5,604v3M575.5,607v2M576.5,609v3M577.5,612v2M578.5,614v2M579.5,612v2M580.5,609v3M581.5,606v3M582.5,604v2M583.5,601v3M584.5,599v2M585.5,597v2M592.5,598v2M593.5,600v2M594.5,602v2M595.5,604v2M596.5,606v2M597.5,608v2M598.5,610v2M599.5,612v2M600.5,614v2M601.5,616v2M602.5,618v3M603.5,621v2M604.5,623v2M605.5,625v2M606.5,627v2M627.5,616v2M628.5,613v3M629.5,610v3M630.5,607v3M631.5,605v2M632.5,602v3M633.5,599v3M634.5,597v2M635.5,599v3M636.5,602v3M637.5,605v4M638.5,609v3M639.5,612v3M640.5,615v3M641.5,618v2M648.5,612v6M649.5,602v10M650.5,592v10M651.5,582v10M652.5,572v10M653.5,562v10M654.5,552v10M655.5,545v7M656.5,540v5M657.5,534v6M658.5,529v5M659.5,524v5M660.5,518v6M661.5,513v5M662.5,510v3M690.5,505v2M691.5,507v2M692.5,509v2M693.5,511v3M694.5,514v2M695.5,516v2M696.5,518v2M697.5,520v2M698.5,522v2M700.5,525v2M701.5,527v2M703.5,530v2M705.5,533v2M707.5,536v2M708.5,538v2M710.5,541v2M711.5,543v2M712.5,545v2M713.5,547v2M714.5,549v2M715.5,551v2M716.5,553v2M717.5,555v2M718.5,557v2M719.5,559v4M720.5,563v3M721.5,566v4M722.5,570v3M723.5,573v3M724.5,576v4M725.5,580v3M726.5,583v3M727.5,586v2M728.5,588v3M729.5,591v3M730.5,594v2M731.5,596v3M732.5,599v2M734.5,597v2M737.5,593v2M741.5,593v2M744.5,597v2M755.5,590v2M758.5,586v2M775.5,583v2M777.5,580v2M780.5,576v2M781.5,572v4M782.5,566v6M783.5,560v6M784.5,553v7M785.5,547v6M786.5,541v6M787.5,535v6M788.5,530v5M789.5,527v3M790.5,525v2M791.5,522v3M792.5,519v3M793.5,517v2M794.5,514v3M795.5,512v2M809.5,512v3M810.5,515v4M811.5,519v5M812.5,524v4M813.5,528v4M814.5,532v5M815.5,537v4M816.5,541v3M825.5,545v2M828.5,549v2M830.5,552v2M831.5,554v3M832.5,557v3M833.5,560v3M834.5,563v2M835.5,565v3M836.5,568v3M837.5,571v2M858.5,575v2M859.5,577v2M860.5,579v2M861.5,581v3M862.5,584v2M863.5,586v2M864.5,588v2M865.5,590v4M866.5,594v4M867.5,598v4M868.5,602v4M869.5,606v4M870.5,610v4M871.5,614v4M872.5,618v2M879.5,624v2M880.5,622v2M881.5,620v2M882.5,617v3M883.5,615v2M884.5,613v2M885.5,611v2M886.5,609v2M916.5,611v2M919.5,615v2M921.5,618v2M922.5,620v2M923.5,622v2M924.5,624v3M925.5,627v2M926.5,629v2M927.5,631v2M928.5,633v3M929.5,636v4M930.5,640v4M931.5,644v4M932.5,648v4M933.5,652v4M934.5,656v4M935.5,660v4M936.5,664v4M937.5,668v4M938.5,672v5M939.5,677v4M940.5,681v4M941.5,685v4M942.5,689v3M680,500.5h4M675,501.5h5M684,501.5h2M673,502.5h2M686,502.5h1M671,503.5h2M687,503.5h1M669,504.5h2M688,504.5h2M668,505.5h1M667,506.5h1M665,507.5h2M664,508.5h1M663,509.5h1M799,511.5h7M796,512.5h3M806,512.5h3M699,524.5h1M702,529.5h1M704,532.5h1M529,533.5h1M527,534.5h2M526,535.5h1M706,535.5h1M525,536.5h1M531,536.5h1M523,537.5h2M709,540.5h1M534,541.5h1M817,543.5h7M243,544.5h1M824,544.5h1M244,545.5h1M245,546.5h2M247,547.5h1M826,547.5h1M248,548.5h1M827,548.5h1M829,551.5h1M500,555.5h2M496,556.5h4M502,556.5h2M495,557.5h1M504,557.5h2M506,558.5h2M508,559.5h1M509,560.5h2M511,561.5h1M512,562.5h1M513,563.5h2M838,573.5h2M840,574.5h2M842,575.5h2M857,575.5h1M844,576.5h2M855,576.5h2M60,577.5h1M846,577.5h4M853,577.5h2M779,578.5h1M850,578.5h3M778,579.5h1M558,581.5h1M559,582.5h1M766,582.5h3M776,582.5h1M560,583.5h1M762,583.5h4M769,583.5h2M561,584.5h1M760,584.5h2M771,584.5h2M562,585.5h1M759,585.5h1M773,585.5h2M563,586.5h1M564,587.5h1M757,588.5h1M756,589.5h1M566,590.5h1M739,591.5h1M738,592.5h1M740,592.5h1M754,592.5h1M568,593.5h1M753,593.5h1M569,594.5h1M752,594.5h1M736,595.5h1M742,595.5h1M751,595.5h1M735,596.5h1M743,596.5h1M750,596.5h1M586,597.5h3M749,597.5h1M589,598.5h3M748,598.5h1M733,599.5h1M745,599.5h1M747,599.5h1M746,600.5h1M900,607.5h4M899,608.5h1M904,608.5h7M898,609.5h1M911,609.5h4M887,610.5h2M897,610.5h1M915,610.5h1M889,611.5h1M896,611.5h1M890,612.5h1M895,612.5h1M891,613.5h2M894,613.5h1M917,613.5h1M893,614.5h1M918,614.5h1M624,617.5h3M647,617.5h1M920,617.5h1M620,618.5h4M643,618.5h4M618,619.5h2M642,619.5h1M617,620.5h1M873,620.5h1M199,621.5h1M616,621.5h1M874,621.5h1M197,622.5h2M614,622.5h2M875,622.5h2M195,623.5h2M613,623.5h1M877,623.5h1M192,624.5h3M460,624.5h1M611,624.5h2M878,624.5h1M188,625.5h4M610,625.5h1M186,626.5h2M609,626.5h1M82,627.5h1M185,627.5h1M462,627.5h1M607,627.5h2M83,628.5h4M184,628.5h1M463,628.5h1M87,629.5h2M183,629.5h1M472,629.5h1M89,630.5h1M182,630.5h1M470,630.5h2M90,631.5h1M181,631.5h1M465,631.5h1M468,631.5h2M91,632.5h1M180,632.5h1M466,632.5h2M92,633.5h1M179,633.5h1M93,634.5h1M94,635.5h1M95,636.5h7M267,638.5h1M151,643.5h1M150,644.5h1M149,645.5h1M148,646.5h1M153,646.5h1M171,647.5h1M450,647.5h2M167,648.5h4M448,648.5h2M146,649.5h1M155,649.5h1M165,649.5h2M446,649.5h2M145,650.5h1M156,650.5h1M163,650.5h2M444,650.5h2M144,651.5h1M161,651.5h2M440,651.5h4M159,652.5h2M438,652.5h2M158,653.5h1M437,653.5h1M142,654.5h1M296,654.5h2M436,654.5h1M141,655.5h1M295,655.5h1M434,655.5h2M294,656.5h1M433,656.5h1M292,657.5h2M432,657.5h1M139,658.5h1M431,658.5h1M430,659.5h1M429,660.5h1M428,661.5h1M427,662.5h1M375,663.5h1M426,663.5h1M374,664.5h1M376,664.5h2M407,664.5h14M425,664.5h1M378,665.5h2M402,665.5h5M421,665.5h4M380,666.5h2M398,666.5h4M372,667.5h1M382,667.5h1M396,667.5h2M371,668.5h1M383,668.5h2M394,668.5h2M385,669.5h2M392,669.5h2M387,670.5h2M390,670.5h2M369,671.5h1M389,671.5h1M368,672.5h1M366,673.5h2M365,674.5h1M306,675.5h2M364,675.5h1M308,676.5h1M318,676.5h2M362,676.5h2M309,677.5h1M316,677.5h2M320,677.5h1M361,677.5h1M310,678.5h2M314,678.5h2M321,678.5h1M360,678.5h1M312,679.5h2M322,679.5h1M359,679.5h1M323,680.5h1M357,680.5h2M110,681.5h1M324,681.5h1M346,681.5h3M356,681.5h1M111,682.5h4M325,682.5h1M342,682.5h4M349,682.5h4M355,682.5h1M115,683.5h2M283,683.5h1M326,683.5h1M340,683.5h2M353,683.5h2M279,684.5h4M327,684.5h2M338,684.5h2M278,685.5h1M329,685.5h2M336,685.5h2M331,686.5h2M334,686.5h2M333,687.5h1M120,690.5h1M943,691.5h1M944,692.5h2M946,693.5h2M948,694.5h2" fill="none" stroke="#ff00ff" stroke-width="1"/>
</g>
<g shape-rendering="crispEdges"><rect x="424" y="632" width="13" height="52" fill="#f0a050"/><rect x="844" y="514" width="13" height="35" fill="#00ffff"/></g>
<text x="-2.5" y="13.5" font-family="'Noto Serif CJK SC','Noto Sans CJK SC',serif" font-size="12.5" fill="#ececec" textLength="48" lengthAdjust="spacingAndGlyphs">美元日元</text>
<text x="45.8" y="13.5" font-family="'Liberation Mono',monospace" font-size="12" fill="#dcdcdc" textLength="66" lengthAdjust="spacingAndGlyphs">(USDJPY)&lt;60</text>
<text x="111.5" y="13.5" font-family="'Noto Serif CJK SC','Noto Sans CJK SC',serif" font-size="12.5" fill="#ececec" textLength="12" lengthAdjust="spacingAndGlyphs">分</text>
<text x="123.8" y="13.5" font-family="'Liberation Mono',monospace" font-size="12" fill="#dcdcdc" textLength="6" lengthAdjust="spacingAndGlyphs">&gt;</text>
<text x="59.5" y="33" font-family="'Liberation Sans','Noto Sans CJK SC',sans-serif" font-size="12" fill="#c0c0c0">K</text>
<text x="74.5" y="33" font-family="'Liberation Sans','Noto Sans CJK SC',sans-serif" font-size="12" fill="#ffffff" textLength="80.5" lengthAdjust="spacingAndGlyphs">MA5:102.7630</text>
<text x="160" y="33" font-family="'Liberation Sans','Noto Sans CJK SC',sans-serif" font-size="12" fill="#ffff00" textLength="87.5" lengthAdjust="spacingAndGlyphs">MA10:102.8958</text>
<text x="251.5" y="33" font-family="'Liberation Sans','Noto Sans CJK SC',sans-serif" font-size="12" fill="#ff00ff" textLength="87.5" lengthAdjust="spacingAndGlyphs">MA20:102.8095</text>
<text x="343" y="33" font-family="'Liberation Sans','Noto Sans CJK SC',sans-serif" font-size="12" fill="#00ff00" textLength="87.5" lengthAdjust="spacingAndGlyphs">MA40:102.3926</text>
<text x="435" y="33" font-family="'Liberation Sans','Noto Sans CJK SC',sans-serif" font-size="12" fill="#8080ff" textLength="87.5" lengthAdjust="spacingAndGlyphs">MA60:102.2897</text>
<text x="52" y="51" font-family="'Liberation Sans','Noto Sans CJK SC',sans-serif" font-size="12" fill="#c8c8c8" font-weight="bold" text-anchor="end">104.0</text>
<text x="52" y="126" font-family="'Liberation Sans','Noto Sans CJK SC',sans-serif" font-size="12" fill="#c8c8c8" font-weight="bold" text-anchor="end">103.5</text>
<text x="52" y="200" font-family="'Liberation Sans','Noto Sans CJK SC',sans-serif" font-size="12" fill="#c8c8c8" font-weight="bold" text-anchor="end">103.0</text>
<text x="52" y="275" font-family="'Liberation Sans','Noto Sans CJK SC',sans-serif" font-size="12" fill="#c8c8c8" font-weight="bold" text-anchor="end">102.5</text>
<text x="52" y="350" font-family="'Liberation Sans','Noto Sans CJK SC',sans-serif" font-size="12" fill="#c8c8c8" font-weight="bold" text-anchor="end">102.0</text>
<text x="52" y="424" font-family="'Liberation Sans','Noto Sans CJK SC',sans-serif" font-size="12" fill="#c8c8c8" font-weight="bold" text-anchor="end">101.5</text>
<text x="52" y="553" font-family="'Liberation Sans','Noto Sans CJK SC',sans-serif" font-size="12" fill="#c8c8c8" font-weight="bold" text-anchor="end">80</text>
<text x="52" y="620" font-family="'Liberation Sans','Noto Sans CJK SC',sans-serif" font-size="12" fill="#c8c8c8" font-weight="bold" text-anchor="end">40</text>
<text x="52" y="688" font-family="'Liberation Sans','Noto Sans CJK SC',sans-serif" font-size="12" fill="#c8c8c8" font-weight="bold" text-anchor="end">0</text>
<text x="59.5" y="49" font-family="'DejaVu Sans',sans-serif" font-size="13" fill="#ffffff" textLength="13" lengthAdjust="spacingAndGlyphs">←</text>
<text x="73" y="50" font-family="'Liberation Sans','Noto Sans CJK SC',sans-serif" font-size="12" fill="#ffffff" font-weight="bold">104.013</text>
<text x="331" y="468" font-family="'Liberation Sans','Noto Sans CJK SC',sans-serif" font-size="12" fill="#ffffff" font-weight="bold">101.207</text>
<text x="376" y="467" font-family="'DejaVu Sans',sans-serif" font-size="13" fill="#d8d8d8" textLength="13" lengthAdjust="spacingAndGlyphs">→</text>
<text x="58" y="494" font-family="'Liberation Sans','Noto Sans CJK SC',sans-serif" font-size="12" fill="#c0c0c0" textLength="43.5" lengthAdjust="spacingAndGlyphs">KDJ顶底</text>
<text x="107" y="494" font-family="'Liberation Sans','Noto Sans CJK SC',sans-serif" font-size="12" fill="#ffffff" textLength="66.5" lengthAdjust="spacingAndGlyphs">选股:0.0000</text>
<text x="178" y="494" font-family="'Liberation Sans','Noto Sans CJK SC',sans-serif" font-size="12" fill="#0000ff" textLength="45" lengthAdjust="spacingAndGlyphs">90.0000</text>
<text x="228" y="494" font-family="'Liberation Sans','Noto Sans CJK SC',sans-serif" font-size="12" fill="#00ffff" textLength="81" lengthAdjust="spacingAndGlyphs">抄底1:30.0000</text>
<text x="313.5" y="494" font-family="'Liberation Sans','Noto Sans CJK SC',sans-serif" font-size="12" fill="#ffffff" textLength="56" lengthAdjust="spacingAndGlyphs">K:58.2615</text>
<text x="374" y="494" font-family="'Liberation Sans','Noto Sans CJK SC',sans-serif" font-size="12" fill="#ffff00" textLength="57.5" lengthAdjust="spacingAndGlyphs">D:62.1605</text>
<text x="436" y="494" font-family="'Liberation Sans','Noto Sans CJK SC',sans-serif" font-size="12" fill="#ff00ff" textLength="54.5" lengthAdjust="spacingAndGlyphs">J:50.4636</text>
<text x="496" y="494" font-family="'Liberation Sans','Noto Sans CJK SC',sans-serif" font-size="12" fill="#ffff00" textLength="51.5" lengthAdjust="spacingAndGlyphs">100.0000</text>
<text x="552.5" y="494" font-family="'Liberation Sans','Noto Sans CJK SC',sans-serif" font-size="12" fill="#ff0000" textLength="66.5" lengthAdjust="spacingAndGlyphs">抄底:0.0000</text>
<text x="623" y="494" font-family="'Liberation Sans','Noto Sans CJK SC',sans-serif" font-size="12" fill="#c0c0c0" textLength="56" lengthAdjust="spacingAndGlyphs">C4:0.0000</text>
<text x="418.5" y="620.5" font-family="'Noto Sans CJK SC',sans-serif" font-size="12" fill="#00ff00" font-weight="bold" textLength="24.5" lengthAdjust="spacingAndGlyphs">抄底</text>
<text x="838" y="570.5" font-family="'Noto Sans CJK SC',sans-serif" font-size="12" fill="#ff0000" font-weight="bold" textLength="25" lengthAdjust="spacingAndGlyphs">逃顶</text>
</svg></body></html>
